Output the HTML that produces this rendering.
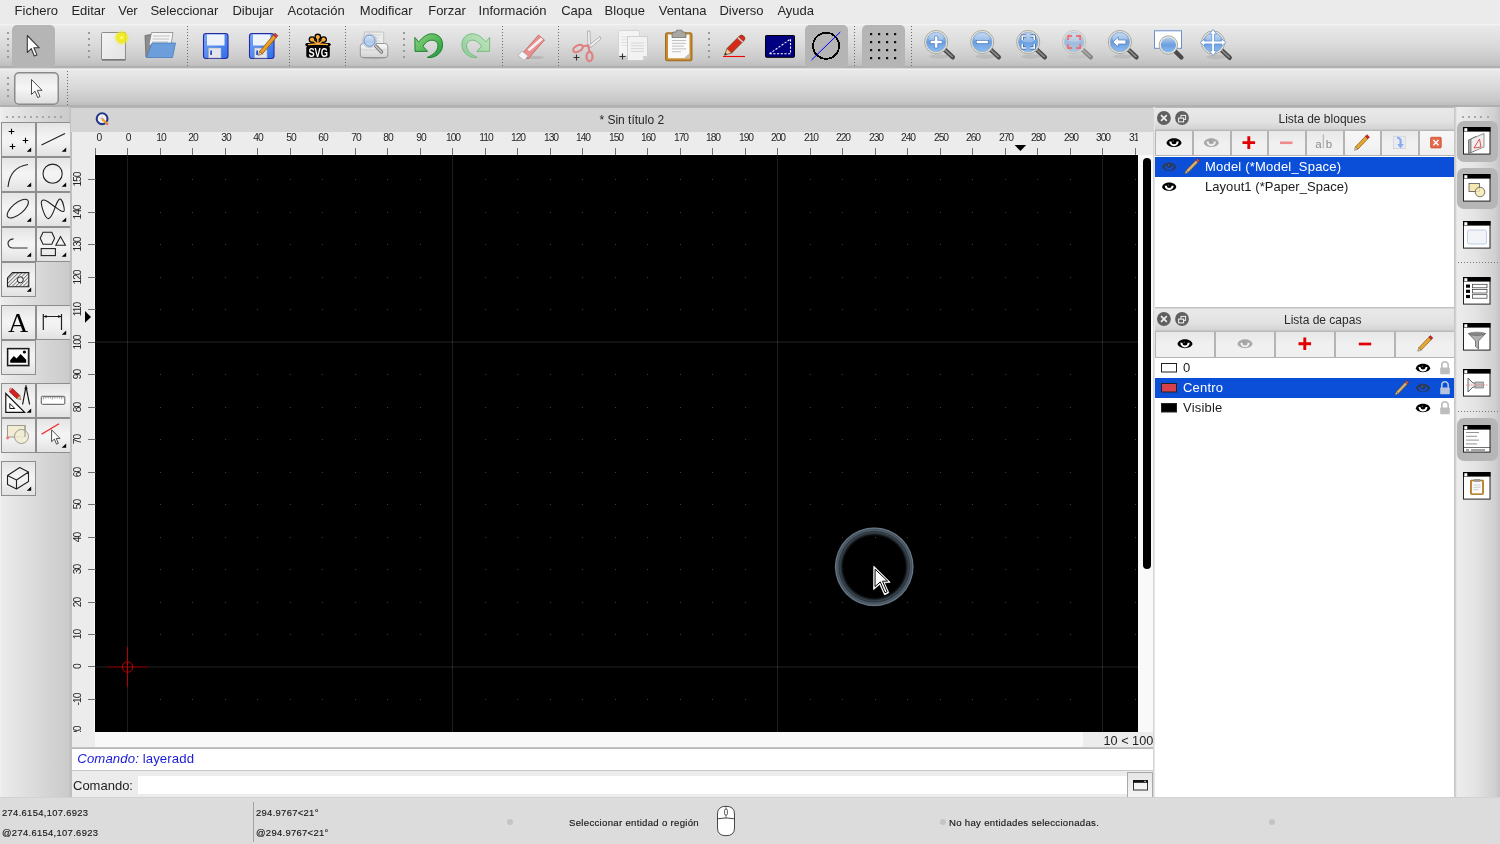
<!DOCTYPE html><html><head><meta charset="utf-8"><style>
html,body{margin:0;padding:0}
body{will-change:transform;width:1500px;height:844px;overflow:hidden;position:relative;background:#ebebeb;font-family:"Liberation Sans",sans-serif}
.a{position:absolute;box-sizing:border-box}
.t{position:absolute;white-space:nowrap;line-height:1}
svg{overflow:visible}
</style></head><body>
<div class="a" style="left:0px;top:0px;width:1500px;height:24px;background:#ebebeb"></div>
<div class="t " style="left:14.60px;top:3.69px;font-size:13px;color:#252525;">Fichero</div>
<div class="t " style="left:71.40px;top:3.69px;font-size:13px;color:#252525;">Editar</div>
<div class="t " style="left:118.20px;top:3.69px;font-size:13px;color:#252525;">Ver</div>
<div class="t " style="left:150.40px;top:3.69px;font-size:13px;color:#252525;">Seleccionar</div>
<div class="t " style="left:232.40px;top:3.69px;font-size:13px;color:#252525;">Dibujar</div>
<div class="t " style="left:287.60px;top:3.69px;font-size:13px;color:#252525;">Acotación</div>
<div class="t " style="left:359.80px;top:3.69px;font-size:13px;color:#252525;">Modificar</div>
<div class="t " style="left:428.20px;top:3.69px;font-size:13px;color:#252525;">Forzar</div>
<div class="t " style="left:478.60px;top:3.69px;font-size:13px;color:#252525;">Información</div>
<div class="t " style="left:561.20px;top:3.69px;font-size:13px;color:#252525;">Capa</div>
<div class="t " style="left:604.60px;top:3.69px;font-size:13px;color:#252525;">Bloque</div>
<div class="t " style="left:658.70px;top:3.69px;font-size:13px;color:#252525;">Ventana</div>
<div class="t " style="left:719.40px;top:3.69px;font-size:13px;color:#252525;">Diverso</div>
<div class="t " style="left:777.40px;top:3.69px;font-size:13px;color:#252525;">Ayuda</div>
<div class="a" style="left:0px;top:24px;width:1500px;height:44px;background:linear-gradient(#f5f5f5 0px,#e9e9e9 2px,#dbdbdb 20px,#c9c9c9 36px,#bebebe 42px,#adadad 42.6px,#b2b2b2 44px)"></div>
<div class="a" style="left:0px;top:68px;width:1500px;height:39px;background:linear-gradient(#c4c4c4 0px,#f3f3f3 1px,#e9e9e9 2.5px,#dadada 18px,#c9c9c9 32px,#bebebe 37px,#adadad 37.6px,#b2b2b2 39px)"></div>
<div class="a" style="left:7px;top:32px;width:2px;height:2px;background:#9a9a9a"></div>
<div class="a" style="left:7px;top:38px;width:2px;height:2px;background:#9a9a9a"></div>
<div class="a" style="left:7px;top:44px;width:2px;height:2px;background:#9a9a9a"></div>
<div class="a" style="left:7px;top:50px;width:2px;height:2px;background:#9a9a9a"></div>
<div class="a" style="left:7px;top:56px;width:2px;height:2px;background:#9a9a9a"></div>
<div class="a" style="left:12px;top:25px;width:43px;height:43px;background:#b5b5b5;border-radius:5px"></div>
<div class="a" style="left:88px;top:32px;width:2px;height:2px;background:#9a9a9a"></div>
<div class="a" style="left:88px;top:38px;width:2px;height:2px;background:#9a9a9a"></div>
<div class="a" style="left:88px;top:44px;width:2px;height:2px;background:#9a9a9a"></div>
<div class="a" style="left:88px;top:50px;width:2px;height:2px;background:#9a9a9a"></div>
<div class="a" style="left:88px;top:56px;width:2px;height:2px;background:#9a9a9a"></div>
<div class="a" style="left:187px;top:26px;width:1px;height:40px;background:repeating-linear-gradient(#6a6a6a 0 1px,transparent 1px 3px)"></div>
<div class="a" style="left:289px;top:26px;width:1px;height:40px;background:repeating-linear-gradient(#6a6a6a 0 1px,transparent 1px 3px)"></div>
<div class="a" style="left:345px;top:26px;width:1px;height:40px;background:repeating-linear-gradient(#6a6a6a 0 1px,transparent 1px 3px)"></div>
<div class="a" style="left:403px;top:32px;width:2px;height:2px;background:#9a9a9a"></div>
<div class="a" style="left:403px;top:38px;width:2px;height:2px;background:#9a9a9a"></div>
<div class="a" style="left:403px;top:44px;width:2px;height:2px;background:#9a9a9a"></div>
<div class="a" style="left:403px;top:50px;width:2px;height:2px;background:#9a9a9a"></div>
<div class="a" style="left:403px;top:56px;width:2px;height:2px;background:#9a9a9a"></div>
<div class="a" style="left:502px;top:26px;width:1px;height:40px;background:repeating-linear-gradient(#6a6a6a 0 1px,transparent 1px 3px)"></div>
<div class="a" style="left:558px;top:26px;width:1px;height:40px;background:repeating-linear-gradient(#6a6a6a 0 1px,transparent 1px 3px)"></div>
<div class="a" style="left:708px;top:32px;width:2px;height:2px;background:#9a9a9a"></div>
<div class="a" style="left:708px;top:38px;width:2px;height:2px;background:#9a9a9a"></div>
<div class="a" style="left:708px;top:44px;width:2px;height:2px;background:#9a9a9a"></div>
<div class="a" style="left:708px;top:50px;width:2px;height:2px;background:#9a9a9a"></div>
<div class="a" style="left:708px;top:56px;width:2px;height:2px;background:#9a9a9a"></div>
<div class="a" style="left:805px;top:25px;width:43px;height:43px;background:#b5b5b5;border-radius:5px"></div>
<div class="a" style="left:854px;top:26px;width:1px;height:40px;background:repeating-linear-gradient(#6a6a6a 0 1px,transparent 1px 3px)"></div>
<div class="a" style="left:862px;top:25px;width:43px;height:43px;background:#b5b5b5;border-radius:5px"></div>
<div class="a" style="left:911px;top:26px;width:1px;height:40px;background:repeating-linear-gradient(#6a6a6a 0 1px,transparent 1px 3px)"></div>
<div class="a" style="left:7px;top:77px;width:2px;height:2px;background:#9a9a9a"></div>
<div class="a" style="left:7px;top:83px;width:2px;height:2px;background:#9a9a9a"></div>
<div class="a" style="left:7px;top:89px;width:2px;height:2px;background:#9a9a9a"></div>
<div class="a" style="left:7px;top:95px;width:2px;height:2px;background:#9a9a9a"></div>
<div class="a" style="left:14px;top:72px;width:45px;height:33px;box-shadow:inset 0 0 0 1.5px #8a8a8a;border-radius:5px;background:linear-gradient(#e6e6e6,#f6f6f6 50%,#dcdcdc)"></div>
<div class="a" style="left:67px;top:71px;width:1px;height:34px;background:repeating-linear-gradient(#6a6a6a 0 1px,transparent 1px 3px)"></div>
<svg width="0" height="0" style="position:absolute"><defs><linearGradient id="zblue" x1="0" y1="0" x2="0" y2="1"><stop offset="0" stop-color="#b8d0ee"/><stop offset="0.5" stop-color="#6a9ee0"/><stop offset="1" stop-color="#8bbcf0"/></linearGradient><linearGradient id="flop" x1="0" y1="0" x2="1" y2="1"><stop offset="0" stop-color="#7aa8f8"/><stop offset="1" stop-color="#2f6ee8"/></linearGradient><linearGradient id="grn" x1="0" y1="0" x2="1" y2="1"><stop offset="0" stop-color="#8fd47e"/><stop offset="1" stop-color="#1f9a3a"/></linearGradient><linearGradient id="grnl" x1="0" y1="0" x2="1" y2="1"><stop offset="0" stop-color="#c4e6c0"/><stop offset="1" stop-color="#8ccb98"/></linearGradient><linearGradient id="pg" x1="0" y1="0" x2="1" y2="1"><stop offset="0" stop-color="#f4f4f4"/><stop offset="1" stop-color="#e2e2e2"/></linearGradient><radialGradient id="glow"><stop offset="0" stop-color="#ffffd0"/><stop offset="0.3" stop-color="#f4ee10"/><stop offset="0.7" stop-color="#eee820" stop-opacity="0.8"/><stop offset="1" stop-color="#f0ec20" stop-opacity="0"/></radialGradient><linearGradient id="prt" x1="0" y1="0" x2="0" y2="1"><stop offset="0" stop-color="#fafafa"/><stop offset="1" stop-color="#d2d2d2"/></linearGradient><linearGradient id="lens" x1="0" y1="0" x2="0" y2="1"><stop offset="0" stop-color="#dce8f6"/><stop offset="0.6" stop-color="#b0c8e8"/><stop offset="1" stop-color="#c8dcf4"/></linearGradient></defs></svg>
<svg class="a" style="left:20px;top:30px" width="30" height="32" viewBox="20 30 30 32"><path d="M27.30 35.50 L27.30 52.50 L31.30 48.70 L34.30 56.00 L36.90 54.90 L33.90 47.80 L39.30 47.80 Z" fill="#fff" stroke="#3a3a3a" stroke-width="1.1" stroke-linejoin="round"/></svg>
<svg class="a" style="left:98px;top:28px" width="34" height="36" viewBox="98 28 34 36"><rect x="101.5" y="32.5" width="24" height="27.5" rx="1" fill="url(#pg)" stroke="#8c8c8c" stroke-width="1"/><rect x="102" y="59" width="23.5" height="1.5" fill="#777"/><circle cx="121.7" cy="37.7" r="7.6" fill="url(#glow)"/></svg>
<svg class="a" style="left:142px;top:30px" width="38" height="32" viewBox="142 30 38 32"><path d="M145 35.5 L151.5 34.5 L151 57 L146 57 Z" fill="#8c8c8c" stroke="#666" stroke-width="0.8"/><path d="M151.5 32.5 L173 32.5 L171 45 L149 45 Z" fill="#f6f6f6" stroke="#888" stroke-width="0.8"/><path d="M153 36 h17 M152.5 39 h16.5 M152 42 h16" stroke="#bdbdbd" stroke-width="1.2"/><path d="M152 43 L175.5 43 L172.5 57.5 L146.5 57.5 Z" fill="#6c9edb" stroke="#4a7cc0" stroke-width="0.8"/></svg>
<svg class="a" style="left:200px;top:30px" width="32" height="32" viewBox="200 30 32 32"><rect x="203.5" y="33.5" width="24.5" height="25" rx="2.5" fill="url(#flop)" stroke="#2a2aa0" stroke-width="1.1"/><rect x="207" y="34.5" width="17.5" height="11" fill="#eef2fb"/><rect x="208.5" y="48" width="12.5" height="10" fill="#e4e4ec" stroke="#9aa" stroke-width="0.5"/><rect x="210.3" y="50.5" width="1.6" height="4.5" fill="#1040c0"/></svg>
<svg class="a" style="left:246px;top:28px" width="34" height="34" viewBox="246 28 34 34"><rect x="249.5" y="33.5" width="24.5" height="25" rx="2.5" fill="url(#flop)" stroke="#2a2aa0" stroke-width="1.1"/><rect x="253" y="34.5" width="17.5" height="11" fill="#eef2fb"/><rect x="254.5" y="48" width="12.5" height="10" fill="#e4e4ec" stroke="#9aa" stroke-width="0.5"/><rect x="256.3" y="50.5" width="1.6" height="4.5" fill="#1040c0"/><path d="M259.5 51.5 L273.5 35 L276.3 37.4 L262.3 53.9 Z" fill="#f0a020" stroke="#8a4a10" stroke-width="0.8"/><path d="M273.5 35 L275 33.2 L277.8 35.6 L276.3 37.4 Z" fill="#e04040" stroke="#8a2a10" stroke-width="0.7"/><path d="M259.5 51.5 L258.4 55.4 L262.3 53.9 Z" fill="#f0d0a0" stroke="#5a3a10" stroke-width="0.5"/></svg>
<svg class="a" style="left:302px;top:30px" width="32" height="30" viewBox="302 30 32 30"><circle cx="317.8" cy="37.0" r="3.4" fill="#000"/><path d="M318 44.5 L317.8 37.0" stroke="#000" stroke-width="3.6"/><circle cx="312.0" cy="39.6" r="3.4" fill="#000"/><path d="M318 44.5 L312.0 39.6" stroke="#000" stroke-width="3.6"/><circle cx="323.6" cy="39.6" r="3.4" fill="#000"/><path d="M318 44.5 L323.6 39.6" stroke="#000" stroke-width="3.6"/><path d="M307 44.6 L329 44.6" stroke="#000" stroke-width="3.4" stroke-linecap="round"/><circle cx="317.8" cy="37.0" r="2.1" fill="#fbae3c"/><path d="M318 44.5 L317.8 37.0" stroke="#fbae3c" stroke-width="1.5"/><circle cx="312.0" cy="39.6" r="2.1" fill="#fbae3c"/><path d="M318 44.5 L312.0 39.6" stroke="#fbae3c" stroke-width="1.5"/><circle cx="323.6" cy="39.6" r="2.1" fill="#fbae3c"/><path d="M318 44.5 L323.6 39.6" stroke="#fbae3c" stroke-width="1.5"/><path d="M308 44.8 Q318 43.2 328 44.8" stroke="#fbae3c" stroke-width="1.5" fill="none"/><rect x="306.3" y="45.6" width="23.5" height="12.2" rx="2.6" fill="#000"/><text x="0" y="0" text-anchor="middle" font-family="Liberation Sans" font-weight="bold" font-size="13.6" fill="#fff" transform="translate(318.2 56.6) scale(0.68 1)">SVG</text></svg>
<svg class="a" style="left:356px;top:29px" width="36" height="33" viewBox="356 29 36 33"><rect x="364.3" y="32" width="19.4" height="14" rx="1" fill="#ececec" stroke="#b8b8b8" stroke-width="0.8"/><path d="M367 35 h14 M367 38 h12 M367 41 h13" stroke="#d4d4d4" stroke-width="1"/><ellipse cx="374" cy="57.6" rx="13" ry="1.6" fill="#000" opacity="0.15"/><path d="M360.3 46.5 Q360.3 43.5 363.3 43.5 L384.8 43.5 Q387.8 43.5 387.8 46.5 L387.8 55 Q387.8 57.5 385 57.5 L363 57.5 Q360.3 57.5 360.3 55 Z" fill="url(#prt)" stroke="#8e8e8e" stroke-width="0.9"/><path d="M362 48.5 Q362 50 364 50 L384 50 Q386 50 386 48.5" fill="none" stroke="#c8c8c8" stroke-width="0.8"/><path d="M375.5 45.8 L381.5 52" stroke="#777" stroke-width="3.4" stroke-linecap="round"/><path d="M375.5 45.8 L381.5 52" stroke="#c8c8c8" stroke-width="1.6" stroke-linecap="round"/><circle cx="369.5" cy="40.7" r="6.9" fill="#f2f2f2" stroke="#aaa" stroke-width="0.6"/><circle cx="369.5" cy="40.7" r="5.6" fill="url(#lens)" stroke="#5a8ad0" stroke-width="1"/></svg>
<svg class="a" style="left:410px;top:30px" width="38" height="32" viewBox="410 30 38 32"><path d="M414.8 37.4 L418.7 42 C422 38 426.5 33.8 431.9 33.8 C438.5 33.8 442.6 38.5 442.6 44.5 C442.6 52 437 57 430 57.6 L427.3 57.4 C433 55 437.9 51 437.9 45.9 C437.9 42 435 40.2 431.9 40.2 C428 40.2 425 43 423 46.3 L427.6 51.4 L415 51.4 Z" fill="url(#grn)" stroke="#137a2a" stroke-width="0.9" stroke-linejoin="round"/></svg>
<svg class="a" style="left:456px;top:30px" width="38" height="32" viewBox="456 30 38 32"><g transform="translate(904.5 0) scale(-1 1)"><path d="M414.8 37.4 L418.7 42 C422 38 426.5 33.8 431.9 33.8 C438.5 33.8 442.6 38.5 442.6 44.5 C442.6 52 437 57 430 57.6 L427.3 57.4 C433 55 437.9 51 437.9 45.9 C437.9 42 435 40.2 431.9 40.2 C428 40.2 425 43 423 46.3 L427.6 51.4 L415 51.4 Z" fill="url(#grnl)" stroke="#6fb87c" stroke-width="0.9" stroke-linejoin="round"/></g></svg>
<svg class="a" style="left:514px;top:30px" width="36" height="32" viewBox="514 30 36 32"><ellipse cx="533" cy="57.5" rx="11" ry="1.6" fill="#000" opacity="0.10"/><path d="M522 54 L538.5 35 L544.5 40 L528 59 Z" fill="#e89090" stroke="#c06060" stroke-width="0.8"/><path d="M527.5 49.5 L541 37.6 L543 39.5 L529.5 51.3 Z" fill="#f4f0f0"/><path d="M518 55.5 L522 51 L528 56 L524 60.5 Z" fill="#f4f4f4" stroke="#aaa" stroke-width="0.8"/></svg>
<svg class="a" style="left:570px;top:28px" width="36" height="36" viewBox="570 28 36 36"><path d="M587.5 31 L590 31 L590.5 47 L588 47 Z" fill="#f4f4f4" stroke="#999" stroke-width="0.7"/><path d="M589.5 45 L600 36.5 L600.8 39 L590.5 47.5 Z" fill="#f4f4f4" stroke="#999" stroke-width="0.7"/><ellipse cx="578" cy="48.5" rx="5.2" ry="3" transform="rotate(-28 578 48.5)" fill="none" stroke="#e08080" stroke-width="2.2"/><ellipse cx="589.5" cy="56.5" rx="3" ry="4.6" fill="none" stroke="#e08080" stroke-width="2.2"/><path d="M582 46.5 L588 45.5 L589.5 51.5" fill="none" stroke="#e08080" stroke-width="2"/><path d="M576.5 54.5 v6 M573.5 57.5 h6" stroke="#333" stroke-width="1.1"/></svg>
<svg class="a" style="left:615px;top:28px" width="36" height="36" viewBox="615 28 36 36"><rect x="618.5" y="30.5" width="21" height="25.5" rx="1" fill="#f4f4f4" stroke="#cfcfcf" stroke-width="0.8"/><path d="M621.5 37 h8 M621.5 39.8 h8 M621.5 42.6 h8 M621.5 45.4 h8" stroke="#e0e0e0" stroke-width="1"/><path d="M627.5 36.5 L647.5 36.5 L647.5 56 L643 60.5 L627.5 60.5 Z" fill="#f2f2f2" stroke="#c8c8c8" stroke-width="0.8"/><path d="M643 60.5 L643 56 L647.5 56 Z" fill="#d0d0d0"/><path d="M631 43 h13 M631 45.8 h13 M631 48.6 h13 M631 51.4 h13" stroke="#d6d6d6" stroke-width="1"/><path d="M622.5 53.5 v6 M619.5 56.5 h6" stroke="#333" stroke-width="1.1"/></svg>
<svg class="a" style="left:662px;top:27px" width="34" height="36" viewBox="662 27 34 36"><rect x="665.5" y="32.8" width="26.5" height="28" rx="1.5" fill="#c88a2a" stroke="#8a5a10" stroke-width="0.8"/><rect x="668" y="34.5" width="21.5" height="23.8" fill="#fafafa"/><path d="M684 58.3 L689.5 58.3 L689.5 53 Z" fill="#bbb"/><path d="M672 34 Q672 32 674 32 L676 32 L676.5 30.2 L682 30.2 L682.5 32 L684 32 Q686 32 686 34 L686 37.5 L672 37.5 Z" fill="#a8a8a0" stroke="#666" stroke-width="0.7"/><path d="M672 40.5 h14 M672 43.3 h14 M672 46.1 h12 M672 48.9 h14 M672 51.7 h9" stroke="#c0c0c0" stroke-width="1"/></svg>
<svg class="a" style="left:720px;top:32px" width="30" height="28" viewBox="720 32 30 28"><path d="M723 56.5 h22" stroke="#f00000" stroke-width="1.1"/><path d="M727 48.5 L739.5 36 Q741.5 34.2 743.5 36 L744.2 36.8 Q745.8 38.6 744 40.4 L731.6 53 Z" fill="#d82a1a" stroke="#6a3a10" stroke-width="0.8"/><path d="M738 37.6 L742.6 42" stroke="#ccc" stroke-width="1.6"/><path d="M727 48.5 L731.6 53 L724.5 55.2 Z" fill="#f2c8a0" stroke="#6a3a10" stroke-width="0.7"/><path d="M724.5 55.2 L725.4 52.6 L727 54.2 Z" fill="#222"/></svg>
<svg class="a" style="left:762px;top:32px" width="36" height="28" viewBox="762 32 36 28"><rect x="765.5" y="35.5" width="29" height="21.8" rx="0.8" fill="#000080" stroke="#000" stroke-width="1"/><path d="M769.5 53.8 L790.5 39 L790.5 53.8 Z" fill="none" stroke="#fff" stroke-width="1.1" stroke-dasharray="2.2 1.5"/></svg>
<svg class="a" style="left:808px;top:28px" width="36" height="36" viewBox="808 28 36 36"><circle cx="826.1" cy="45.8" r="13" fill="none" stroke="#000" stroke-width="1.8" shape-rendering="crispEdges"/><path d="M811.5 60 L840.3 32" stroke="#0000ff" stroke-width="1"/></svg>
<svg class="a" style="left:866px;top:30px" width="34" height="34" viewBox="866 30 34 34"><rect x="870" y="33" width="2.2" height="2.2" fill="#111"/><rect x="870" y="41" width="2.2" height="2.2" fill="#111"/><rect x="870" y="49" width="2.2" height="2.2" fill="#111"/><rect x="870" y="57" width="2.2" height="2.2" fill="#111"/><rect x="878" y="33" width="2.2" height="2.2" fill="#111"/><rect x="878" y="41" width="2.2" height="2.2" fill="#111"/><rect x="878" y="49" width="2.2" height="2.2" fill="#111"/><rect x="878" y="57" width="2.2" height="2.2" fill="#111"/><rect x="886" y="33" width="2.2" height="2.2" fill="#111"/><rect x="886" y="41" width="2.2" height="2.2" fill="#111"/><rect x="886" y="49" width="2.2" height="2.2" fill="#111"/><rect x="886" y="57" width="2.2" height="2.2" fill="#111"/><rect x="894" y="33" width="2.2" height="2.2" fill="#111"/><rect x="894" y="41" width="2.2" height="2.2" fill="#111"/><rect x="894" y="49" width="2.2" height="2.2" fill="#111"/><rect x="894" y="57" width="2.2" height="2.2" fill="#111"/></svg>
<svg class="a" style="left:915px;top:26px" width="330" height="40" viewBox="915 26 330 40"><g><ellipse cx="939.2" cy="56.5" rx="10" ry="2.2" fill="#000" opacity="0.08"/><path d="M944.4000000000001 49.3 L952.7 57.2" stroke="#4a4a4a" stroke-width="4.6" stroke-linecap="round"/><path d="M944.4000000000001 49.3 L952.2 56.7" stroke="#8a8a8a" stroke-width="1.6" stroke-linecap="round"/><circle cx="936.2" cy="42" r="11.6" fill="#e9e8e0" stroke="#9a9a90" stroke-width="0.8"/><circle cx="936.2" cy="42" r="9.8" fill="url(#zblue)" stroke="#7e9cc4" stroke-width="0.6"/><ellipse cx="936.2" cy="38" rx="7.5" ry="4.5" fill="#fff" opacity="0.25"/></g><path d="M934.6 36 h3.2 v4.4 h4.4 v3.2 h-4.4 v4.4 h-3.2 v-4.4 h-4.4 v-3.2 h4.4 Z" fill="#fff" stroke="#3a6ab0" stroke-width="0.6"/><g><ellipse cx="985.2" cy="56.5" rx="10" ry="2.2" fill="#000" opacity="0.08"/><path d="M990.4000000000001 49.3 L998.7 57.2" stroke="#4a4a4a" stroke-width="4.6" stroke-linecap="round"/><path d="M990.4000000000001 49.3 L998.2 56.7" stroke="#8a8a8a" stroke-width="1.6" stroke-linecap="round"/><circle cx="982.2" cy="42" r="11.6" fill="#e9e8e0" stroke="#9a9a90" stroke-width="0.8"/><circle cx="982.2" cy="42" r="9.8" fill="url(#zblue)" stroke="#7e9cc4" stroke-width="0.6"/><ellipse cx="982.2" cy="38" rx="7.5" ry="4.5" fill="#fff" opacity="0.25"/></g><rect x="976.2" y="40.3" width="12" height="3.4" fill="#fff" stroke="#3a6ab0" stroke-width="0.6"/><g><ellipse cx="1031.2" cy="56.5" rx="10" ry="2.2" fill="#000" opacity="0.08"/><path d="M1036.4 49.3 L1044.7 57.2" stroke="#4a4a4a" stroke-width="4.6" stroke-linecap="round"/><path d="M1036.4 49.3 L1044.2 56.7" stroke="#8a8a8a" stroke-width="1.6" stroke-linecap="round"/><circle cx="1028.2" cy="42" r="11.6" fill="#e9e8e0" stroke="#9a9a90" stroke-width="0.8"/><circle cx="1028.2" cy="42" r="9.8" fill="url(#zblue)" stroke="#7e9cc4" stroke-width="0.6"/><ellipse cx="1028.2" cy="38" rx="7.5" ry="4.5" fill="#fff" opacity="0.25"/></g><path d="M1022.2 40 v-4 h4 M1030.2 36 h4 v4 M1034.2 44 v4 h-4 M1026.2 48 h-4 v-4" fill="none" stroke="#2a5aa0" stroke-width="2.8"/><path d="M1022.2 40 v-4 h4 M1030.2 36 h4 v4 M1034.2 44 v4 h-4 M1026.2 48 h-4 v-4" fill="none" stroke="#fff" stroke-width="1.6"/><g opacity="0.55"><ellipse cx="1077.1" cy="56.5" rx="10" ry="2.2" fill="#000" opacity="0.08"/><path d="M1082.3 49.3 L1090.6 57.2" stroke="#4a4a4a" stroke-width="4.6" stroke-linecap="round"/><path d="M1082.3 49.3 L1090.1 56.7" stroke="#8a8a8a" stroke-width="1.6" stroke-linecap="round"/><circle cx="1074.1" cy="42" r="11.6" fill="#e9e8e0" stroke="#9a9a90" stroke-width="0.8"/><circle cx="1074.1" cy="42" r="9.8" fill="url(#zblue)" stroke="#7e9cc4" stroke-width="0.6"/><ellipse cx="1074.1" cy="38" rx="7.5" ry="4.5" fill="#fff" opacity="0.25"/></g><path d="M1068.1 40 v-4 h4 M1076.1 36 h4 v4 M1080.1 44 v4 h-4 M1072.1 48 h-4 v-4" fill="none" stroke="#f07070" stroke-width="1.8"/><g><ellipse cx="1122.9" cy="56.5" rx="10" ry="2.2" fill="#000" opacity="0.08"/><path d="M1128.1000000000001 49.3 L1136.4 57.2" stroke="#4a4a4a" stroke-width="4.6" stroke-linecap="round"/><path d="M1128.1000000000001 49.3 L1135.9 56.7" stroke="#8a8a8a" stroke-width="1.6" stroke-linecap="round"/><circle cx="1119.9" cy="42" r="11.6" fill="#e9e8e0" stroke="#9a9a90" stroke-width="0.8"/><circle cx="1119.9" cy="42" r="9.8" fill="url(#zblue)" stroke="#7e9cc4" stroke-width="0.6"/><ellipse cx="1119.9" cy="38" rx="7.5" ry="4.5" fill="#fff" opacity="0.25"/></g><path d="M1112.9 42 L1118.4 37 L1118.4 40 L1125.9 40 L1125.9 44 L1118.4 44 L1118.4 47 Z" fill="#fff" stroke="#3a6ab0" stroke-width="0.6"/><rect x="1154.5" y="30.8" width="27" height="17.5" fill="#fff" stroke="#6a90c8" stroke-width="1"/><path d="M1174.9 51 L1181.4 57.5" stroke="#4a4a4a" stroke-width="4.4" stroke-linecap="round"/><circle cx="1168.4" cy="45" r="9.2" fill="#e9e8e0" stroke="#9a9a90" stroke-width="0.8"/><circle cx="1168.4" cy="45" r="7.6" fill="url(#zblue)"/><g><ellipse cx="1216.1" cy="57.0" rx="10" ry="2.2" fill="#000" opacity="0.08"/><path d="M1221.3 49.8 L1229.6 57.7" stroke="#4a4a4a" stroke-width="4.6" stroke-linecap="round"/><path d="M1221.3 49.8 L1229.1 57.2" stroke="#8a8a8a" stroke-width="1.6" stroke-linecap="round"/><circle cx="1213.1" cy="42.5" r="11.6" fill="#e9e8e0" stroke="#9a9a90" stroke-width="0.8"/><circle cx="1213.1" cy="42.5" r="9.8" fill="url(#zblue)" stroke="#7e9cc4" stroke-width="0.6"/><ellipse cx="1213.1" cy="38.5" rx="7.5" ry="4.5" fill="#fff" opacity="0.25"/></g><path d="M1213.1 29.5 L1216.6 34.0 L1214.5 34.0 L1214.5 41.1 L1221.6 41.1 L1221.6 39.0 L1226.1 42.5 L1221.6 46.0 L1221.6 43.9 L1214.5 43.9 L1214.5 51.0 L1216.6 51.0 L1213.1 55.5 L1209.6 51.0 L1211.6999999999998 51.0 L1211.6999999999998 43.9 L1204.6 43.9 L1204.6 46.0 L1200.1 42.5 L1204.6 39.0 L1204.6 41.1 L1211.6999999999998 41.1 L1211.6999999999998 34.0 L1209.6 34.0 Z" fill="#fff" stroke="#5a8ad0" stroke-width="0.7"/></svg>
<svg class="a" style="left:26px;top:75px" width="20" height="26" viewBox="26 75 20 26"><path d="M31.50 79.50 L31.50 94.46 L35.02 91.12 L37.66 97.54 L39.95 96.57 L37.31 90.32 L42.06 90.32 Z" fill="#fff" stroke="#3a3a3a" stroke-width="0.9" stroke-linejoin="round"/></svg>
<div class="a" style="left:0px;top:107px;width:71px;height:691px;background:linear-gradient(90deg,#f2f2f2 0px,#ebebeb 2px,#e2e2e2 20px,#d3d3d3 50px,#cbcbcb 69px,#bdbdbd 70px,#bdbdbd 71px)"></div>
<div class="a" style="left:6px;top:116px;width:2px;height:2px;background:#a8a8a8"></div>
<div class="a" style="left:12px;top:116px;width:2px;height:2px;background:#a8a8a8"></div>
<div class="a" style="left:18px;top:116px;width:2px;height:2px;background:#a8a8a8"></div>
<div class="a" style="left:24px;top:116px;width:2px;height:2px;background:#a8a8a8"></div>
<div class="a" style="left:30px;top:116px;width:2px;height:2px;background:#a8a8a8"></div>
<div class="a" style="left:36px;top:116px;width:2px;height:2px;background:#a8a8a8"></div>
<div class="a" style="left:42px;top:116px;width:2px;height:2px;background:#a8a8a8"></div>
<div class="a" style="left:48px;top:116px;width:2px;height:2px;background:#a8a8a8"></div>
<div class="a" style="left:54px;top:116px;width:2px;height:2px;background:#a8a8a8"></div>
<div class="a" style="left:60px;top:116px;width:2px;height:2px;background:#a8a8a8"></div>
<div class="a" style="left:1px;top:122px;width:35px;height:35px;border:1px solid #8e8e8e;background:linear-gradient(#e4e4e4,#f4f4f4 45%,#f2f2f2 60%,#e2e2e2)"></div>
<div class="a" style="left:36px;top:122px;width:35px;height:35px;border:1px solid #8e8e8e;background:linear-gradient(#e4e4e4,#f4f4f4 45%,#f2f2f2 60%,#e2e2e2)"></div>
<div class="a" style="left:1px;top:157px;width:35px;height:35px;border:1px solid #8e8e8e;background:linear-gradient(#e4e4e4,#f4f4f4 45%,#f2f2f2 60%,#e2e2e2)"></div>
<div class="a" style="left:36px;top:157px;width:35px;height:35px;border:1px solid #8e8e8e;background:linear-gradient(#e4e4e4,#f4f4f4 45%,#f2f2f2 60%,#e2e2e2)"></div>
<div class="a" style="left:1px;top:192px;width:35px;height:35px;border:1px solid #8e8e8e;background:linear-gradient(#e4e4e4,#f4f4f4 45%,#f2f2f2 60%,#e2e2e2)"></div>
<div class="a" style="left:36px;top:192px;width:35px;height:35px;border:1px solid #8e8e8e;background:linear-gradient(#e4e4e4,#f4f4f4 45%,#f2f2f2 60%,#e2e2e2)"></div>
<div class="a" style="left:1px;top:227px;width:35px;height:35px;border:1px solid #8e8e8e;background:linear-gradient(#e4e4e4,#f4f4f4 45%,#f2f2f2 60%,#e2e2e2)"></div>
<div class="a" style="left:36px;top:227px;width:35px;height:35px;border:1px solid #8e8e8e;background:linear-gradient(#e4e4e4,#f4f4f4 45%,#f2f2f2 60%,#e2e2e2)"></div>
<div class="a" style="left:1px;top:262px;width:35px;height:35px;border:1px solid #8e8e8e;background:linear-gradient(#e4e4e4,#f4f4f4 45%,#f2f2f2 60%,#e2e2e2)"></div>
<div class="a" style="left:1px;top:305px;width:35px;height:35px;border:1px solid #8e8e8e;background:linear-gradient(#e4e4e4,#f4f4f4 45%,#f2f2f2 60%,#e2e2e2)"></div>
<div class="a" style="left:36px;top:305px;width:35px;height:35px;border:1px solid #8e8e8e;background:linear-gradient(#e4e4e4,#f4f4f4 45%,#f2f2f2 60%,#e2e2e2)"></div>
<div class="a" style="left:1px;top:340px;width:35px;height:35px;border:1px solid #8e8e8e;background:linear-gradient(#e4e4e4,#f4f4f4 45%,#f2f2f2 60%,#e2e2e2)"></div>
<div class="a" style="left:1px;top:383px;width:35px;height:35px;border:1px solid #8e8e8e;background:linear-gradient(#e4e4e4,#f4f4f4 45%,#f2f2f2 60%,#e2e2e2)"></div>
<div class="a" style="left:36px;top:383px;width:35px;height:35px;border:1px solid #8e8e8e;background:linear-gradient(#e4e4e4,#f4f4f4 45%,#f2f2f2 60%,#e2e2e2)"></div>
<div class="a" style="left:1px;top:418px;width:35px;height:35px;border:1px solid #8e8e8e;background:linear-gradient(#e4e4e4,#f4f4f4 45%,#f2f2f2 60%,#e2e2e2)"></div>
<div class="a" style="left:36px;top:418px;width:35px;height:35px;border:1px solid #8e8e8e;background:linear-gradient(#e4e4e4,#f4f4f4 45%,#f2f2f2 60%,#e2e2e2)"></div>
<div class="a" style="left:1px;top:461px;width:35px;height:35px;border:1px solid #8e8e8e;background:linear-gradient(#e4e4e4,#f4f4f4 45%,#f2f2f2 60%,#e2e2e2)"></div>
<svg class="a" style="left:0px;top:107px" width="71" height="400" viewBox="0 107 71 400"><path d="M8.7 131.5 h5.6 M11.5 128.7 v5.6" stroke="#000" stroke-width="1.1"/><path d="M22.7 140.5 h5.6 M25.5 137.7 v5.6" stroke="#000" stroke-width="1.1"/><path d="M9.7 146.5 h5.6 M12.5 143.7 v5.6" stroke="#000" stroke-width="1.1"/><path d="M31.2 151.7 L31.2 147.39999999999998 L26.7 151.7 Z" fill="#000"/><path d="M41.5 145 L65 133.5" stroke="#222" stroke-width="1.2"/><path d="M66.2 151.7 L66.2 147.39999999999998 L61.7 151.7 Z" fill="#000"/><path d="M8 187 Q10 167 28 164.5" fill="none" stroke="#222" stroke-width="1.1"/><path d="M31.2 186.7 L31.2 182.39999999999998 L26.7 186.7 Z" fill="#000"/><circle cx="52.6" cy="173.7" r="9.6" fill="none" stroke="#222" stroke-width="1.1"/><path d="M66.2 186.7 L66.2 182.39999999999998 L61.7 186.7 Z" fill="#000"/><ellipse cx="17.8" cy="208.6" rx="13" ry="5.6" transform="rotate(-40 17.8 208.6)" fill="none" stroke="#222" stroke-width="1.1"/><path d="M31.2 221.7 L31.2 217.39999999999998 L26.7 221.7 Z" fill="#000"/><path d="M55 207 C50 203 44 198 41.8 200.8 C40 203.5 45 219 48.5 218.6 C52 218 54 210 56 205 C58 200 59.5 198 61 199.5 C63 201.5 65.5 211 63.5 211.5 C61 212 58 208.5 55 207 Z" fill="none" stroke="#222" stroke-width="1.1"/><path d="M66.2 221.7 L66.2 217.39999999999998 L61.7 221.7 Z" fill="#000"/><path d="M13.5 238.8 Q8 239.5 8 243.5 Q8.5 248 13 248 L27.6 248" fill="none" stroke="#333" stroke-width="1.2"/><path d="M31.2 256.7 L31.2 252.39999999999998 L26.7 256.7 Z" fill="#000"/><path d="M43 232.2 L51.8 232.2 L54.6 238.2 L51.8 244.2 L43 244.2 L40.2 238.2 Z" fill="none" stroke="#222" stroke-width="1.1"/><path d="M60.5 236.6 L55.8 245.3 L65.4 245.3 Z" fill="none" stroke="#222" stroke-width="1.1"/><rect x="41.2" y="248.6" width="14.2" height="7" fill="none" stroke="#222" stroke-width="1.1"/><path d="M66.2 256.7 L66.2 252.39999999999998 L61.7 256.7 Z" fill="#000"/><defs><pattern id="hp" width="2.6" height="2.6" patternUnits="userSpaceOnUse" patternTransform="rotate(45)"><rect width="0.9" height="2.6" fill="#777"/></pattern></defs><path d="M7.5 282.5 L7.5 278 L12.5 272.6 L28.8 272.6 L28.8 286.8 L7.5 286.8 Z" fill="url(#hp)" stroke="#222" stroke-width="1.1"/><circle cx="20.3" cy="279.8" r="3" fill="#eee" stroke="#222" stroke-width="1"/><path d="M31.2 291.7 L31.2 287.4 L26.7 291.7 Z" fill="#000"/><text x="18.2" y="332" text-anchor="middle" font-family="Liberation Serif" font-size="28" fill="#000">A</text><path d="M43.3 314 v16 M61.5 314 v16" stroke="#222" stroke-width="1.2"/><path d="M43.3 316.5 h18.2" stroke="#222" stroke-width="1"/><path d="M43.6 316.5 l3 -1.6 v3.2 Z M61.2 316.5 l-3 -1.6 v3.2 Z" fill="#111"/><path d="M66.2 334.7 L66.2 330.4 L61.7 334.7 Z" fill="#000"/><rect x="7.6" y="348.6" width="21.2" height="17" fill="#fff" stroke="#1a1a1a" stroke-width="1.5"/><rect x="8.8" y="349.8" width="18.8" height="14.6" fill="none" stroke="#999" stroke-width="0.5"/><path d="M10.2 362.8 L10.2 360.2 L13.8 356 L16.6 358.6 L20.6 354 L26.2 359.8 L26.2 362.8 Z" fill="#000"/><circle cx="24.4" cy="352" r="1.6" fill="#000"/><path d="M5.8 393.5 L5.8 412.4 L24.6 412.4 Z" fill="#fff" stroke="#111" stroke-width="1.2"/><path d="M9.8 403.5 L9.8 408.5 L14.8 408.5 Z" fill="none" stroke="#111" stroke-width="1"/><path d="M9.3 391.6 L12.3 388.4 L19.8 395.4 L16.8 398.6 Z" fill="#d82020" stroke="#6a1a10" stroke-width="0.7"/><path d="M9.3 391.6 L12.3 388.4 L11 387.6 L9 388.6 Z" fill="#f08080"/><path d="M16.8 398.6 L19.8 395.4 L21 399.8 Z" fill="#e8c090" stroke="#6a4a20" stroke-width="0.5"/><path d="M26 386.5 L22.6 404.5 M26 386.5 L29.6 404.5" stroke="#111" stroke-width="1.2"/><circle cx="26" cy="388.5" r="1.4" fill="#111"/><path d="M26 385 v2" stroke="#111" stroke-width="1"/><path d="M31.2 412.7 L31.2 408.4 L26.7 412.7 Z" fill="#000"/><rect x="41.3" y="396.3" width="23.5" height="8" rx="1" fill="#fff" stroke="#555" stroke-width="1"/><path d="M43.3 396.8 v2.6M45.1 396.8 v1.6M46.9 396.8 v1.6M48.7 396.8 v1.6M50.5 396.8 v1.6M52.3 396.8 v2.6M54.1 396.8 v1.6M55.9 396.8 v1.6M57.7 396.8 v1.6M59.5 396.8 v1.6M61.3 396.8 v2.6M63.1 396.8 v1.6" stroke="#555" stroke-width="0.6"/><rect x="7.5" y="425.5" width="17.5" height="11.5" fill="#f2ecd2" stroke="#9a9a90" stroke-width="1"/><circle cx="21.5" cy="436.5" r="7" fill="#f2ecd2" fill-opacity="0.85" stroke="#9a9a90" stroke-width="1"/><path d="M7.5 425.5 h17.5 v11.5" fill="none" stroke="#9a9a90" stroke-width="1"/><circle cx="7.6" cy="438" r="1.4" fill="#f07070"/><path d="M41.5 434.2 L59 423.8" stroke="#f02020" stroke-width="1.2"/><path d="M51.60 429.80 L51.60 441.70 L54.40 439.04 L56.50 444.15 L58.32 443.38 L56.22 438.41 L60.00 438.41 Z" fill="#fff" stroke="#3a3a3a" stroke-width="0.9" stroke-linejoin="round"/><path d="M66.2 447.7 L66.2 443.4 L61.7 447.7 Z" fill="#000"/><path d="M7.5 475.5 L19.7 467.5 L28.5 472 L28.5 481.5 L16.5 489 L7.5 484.5 Z M7.5 475.5 L16.5 480 L28.5 472 M16.5 480 L16.5 489" fill="none" stroke="#222" stroke-width="1.1" stroke-linejoin="round"/><path d="M31.2 490.7 L31.2 486.4 L26.7 490.7 Z" fill="#000"/></svg>
<div class="a" style="left:71px;top:107px;width:84px;height:0px;"></div>
<div class="a" style="left:70px;top:107px;width:1085px;height:691px;background:#ececec;border-left:2px solid #c0c0c0"></div>
<div class="a" style="left:71px;top:107px;width:1084px;height:1px;background:#b5b5b5"></div>
<div class="a" style="left:71px;top:108px;width:1084px;height:24px;background:#d4d4d4"></div>
<div class="t " style="left:599.40px;top:113.64px;font-size:12px;color:#262626;">* Sin título 2</div>
<div class="a" style="left:72px;top:132px;width:1081px;height:23px;background:#ececec"></div>
<div class="a" style="left:72px;top:155px;width:23px;height:593px;background:#ececec"></div>
<div class="a" style="left:95px;top:155px;width:1043px;height:577px;background:#000"></div>
<div class="a" style="left:1138px;top:155px;width:15px;height:577px;background:#f9f9f9"></div>
<div class="a" style="left:1143px;top:158px;width:8px;height:411px;background:#000;border-radius:4px"></div>
<div class="a" style="left:95px;top:732px;width:1058px;height:16px;background:#f8f8f8"></div>
<div class="a" style="left:1083px;top:732px;width:70px;height:16px;background:#ececec"></div>
<div class="t " style="left:1103.50px;top:734.54px;font-size:12.7px;color:#1e1e1e;">10 &lt; 100</div>
<div class="a" style="left:72px;top:747px;width:1081px;height:2px;background:linear-gradient(#c8c8c8,#b4b4b4)"></div>
<div class="a" style="left:72px;top:749px;width:1081px;height:21px;background:#fff"></div>
<div class="a" style="left:72px;top:770px;width:1081px;height:1px;background:#c8c8c8"></div>
<div class="t" style="left:77.3px;top:751.62px;font-size:13.2px;color:#1b1bd8;letter-spacing:0.1px"><i>Comando:</i> layeradd</div>
<div class="a" style="left:72px;top:771px;width:1081px;height:27px;background:#ececec"></div>
<div class="t " style="left:73.00px;top:778.99px;font-size:13px;color:#1e1e1e;">Comando:</div>
<div class="a" style="left:138px;top:776px;width:990px;height:18px;background:#fff"></div>
<div class="a" style="left:1127px;top:772px;width:26px;height:26px;border:1px solid #a9a9a9;background:linear-gradient(#e6e6e6,#f5f5f5)"></div>
<div class="a" style="left:1153px;top:107px;width:1px;height:691px;background:#d6d6d6"></div>
<div class="a" style="left:1154px;top:107px;width:1px;height:691px;background:#e6e6e6"></div>
<svg class="a" style="left:95px;top:155px" width="1043" height="577" viewBox="95 155 1043 577" shape-rendering="crispEdges"><rect x="95" y="155" width="1043" height="577" fill="#000"/><path d="M95 699h1v1h-1zM95 666h1v1h-1zM95 634h1v1h-1zM95 602h1v1h-1zM95 569h1v1h-1zM95 537h1v1h-1zM95 504h1v1h-1zM95 472h1v1h-1zM95 439h1v1h-1zM95 407h1v1h-1zM95 374h1v1h-1zM95 342h1v1h-1zM95 309h1v1h-1zM95 277h1v1h-1zM95 244h1v1h-1zM95 212h1v1h-1zM95 179h1v1h-1zM127 699h1v1h-1zM127 666h1v1h-1zM127 634h1v1h-1zM127 602h1v1h-1zM127 569h1v1h-1zM127 537h1v1h-1zM127 504h1v1h-1zM127 472h1v1h-1zM127 439h1v1h-1zM127 407h1v1h-1zM127 374h1v1h-1zM127 342h1v1h-1zM127 309h1v1h-1zM127 277h1v1h-1zM127 244h1v1h-1zM127 212h1v1h-1zM127 179h1v1h-1zM160 699h1v1h-1zM160 666h1v1h-1zM160 634h1v1h-1zM160 602h1v1h-1zM160 569h1v1h-1zM160 537h1v1h-1zM160 504h1v1h-1zM160 472h1v1h-1zM160 439h1v1h-1zM160 407h1v1h-1zM160 374h1v1h-1zM160 342h1v1h-1zM160 309h1v1h-1zM160 277h1v1h-1zM160 244h1v1h-1zM160 212h1v1h-1zM160 179h1v1h-1zM192 699h1v1h-1zM192 666h1v1h-1zM192 634h1v1h-1zM192 602h1v1h-1zM192 569h1v1h-1zM192 537h1v1h-1zM192 504h1v1h-1zM192 472h1v1h-1zM192 439h1v1h-1zM192 407h1v1h-1zM192 374h1v1h-1zM192 342h1v1h-1zM192 309h1v1h-1zM192 277h1v1h-1zM192 244h1v1h-1zM192 212h1v1h-1zM192 179h1v1h-1zM225 699h1v1h-1zM225 666h1v1h-1zM225 634h1v1h-1zM225 602h1v1h-1zM225 569h1v1h-1zM225 537h1v1h-1zM225 504h1v1h-1zM225 472h1v1h-1zM225 439h1v1h-1zM225 407h1v1h-1zM225 374h1v1h-1zM225 342h1v1h-1zM225 309h1v1h-1zM225 277h1v1h-1zM225 244h1v1h-1zM225 212h1v1h-1zM225 179h1v1h-1zM257 699h1v1h-1zM257 666h1v1h-1zM257 634h1v1h-1zM257 602h1v1h-1zM257 569h1v1h-1zM257 537h1v1h-1zM257 504h1v1h-1zM257 472h1v1h-1zM257 439h1v1h-1zM257 407h1v1h-1zM257 374h1v1h-1zM257 342h1v1h-1zM257 309h1v1h-1zM257 277h1v1h-1zM257 244h1v1h-1zM257 212h1v1h-1zM257 179h1v1h-1zM290 699h1v1h-1zM290 666h1v1h-1zM290 634h1v1h-1zM290 602h1v1h-1zM290 569h1v1h-1zM290 537h1v1h-1zM290 504h1v1h-1zM290 472h1v1h-1zM290 439h1v1h-1zM290 407h1v1h-1zM290 374h1v1h-1zM290 342h1v1h-1zM290 309h1v1h-1zM290 277h1v1h-1zM290 244h1v1h-1zM290 212h1v1h-1zM290 179h1v1h-1zM322 699h1v1h-1zM322 666h1v1h-1zM322 634h1v1h-1zM322 602h1v1h-1zM322 569h1v1h-1zM322 537h1v1h-1zM322 504h1v1h-1zM322 472h1v1h-1zM322 439h1v1h-1zM322 407h1v1h-1zM322 374h1v1h-1zM322 342h1v1h-1zM322 309h1v1h-1zM322 277h1v1h-1zM322 244h1v1h-1zM322 212h1v1h-1zM322 179h1v1h-1zM355 699h1v1h-1zM355 666h1v1h-1zM355 634h1v1h-1zM355 602h1v1h-1zM355 569h1v1h-1zM355 537h1v1h-1zM355 504h1v1h-1zM355 472h1v1h-1zM355 439h1v1h-1zM355 407h1v1h-1zM355 374h1v1h-1zM355 342h1v1h-1zM355 309h1v1h-1zM355 277h1v1h-1zM355 244h1v1h-1zM355 212h1v1h-1zM355 179h1v1h-1zM387 699h1v1h-1zM387 666h1v1h-1zM387 634h1v1h-1zM387 602h1v1h-1zM387 569h1v1h-1zM387 537h1v1h-1zM387 504h1v1h-1zM387 472h1v1h-1zM387 439h1v1h-1zM387 407h1v1h-1zM387 374h1v1h-1zM387 342h1v1h-1zM387 309h1v1h-1zM387 277h1v1h-1zM387 244h1v1h-1zM387 212h1v1h-1zM387 179h1v1h-1zM420 699h1v1h-1zM420 666h1v1h-1zM420 634h1v1h-1zM420 602h1v1h-1zM420 569h1v1h-1zM420 537h1v1h-1zM420 504h1v1h-1zM420 472h1v1h-1zM420 439h1v1h-1zM420 407h1v1h-1zM420 374h1v1h-1zM420 342h1v1h-1zM420 309h1v1h-1zM420 277h1v1h-1zM420 244h1v1h-1zM420 212h1v1h-1zM420 179h1v1h-1zM452 699h1v1h-1zM452 666h1v1h-1zM452 634h1v1h-1zM452 602h1v1h-1zM452 569h1v1h-1zM452 537h1v1h-1zM452 504h1v1h-1zM452 472h1v1h-1zM452 439h1v1h-1zM452 407h1v1h-1zM452 374h1v1h-1zM452 342h1v1h-1zM452 309h1v1h-1zM452 277h1v1h-1zM452 244h1v1h-1zM452 212h1v1h-1zM452 179h1v1h-1zM485 699h1v1h-1zM485 666h1v1h-1zM485 634h1v1h-1zM485 602h1v1h-1zM485 569h1v1h-1zM485 537h1v1h-1zM485 504h1v1h-1zM485 472h1v1h-1zM485 439h1v1h-1zM485 407h1v1h-1zM485 374h1v1h-1zM485 342h1v1h-1zM485 309h1v1h-1zM485 277h1v1h-1zM485 244h1v1h-1zM485 212h1v1h-1zM485 179h1v1h-1zM517 699h1v1h-1zM517 666h1v1h-1zM517 634h1v1h-1zM517 602h1v1h-1zM517 569h1v1h-1zM517 537h1v1h-1zM517 504h1v1h-1zM517 472h1v1h-1zM517 439h1v1h-1zM517 407h1v1h-1zM517 374h1v1h-1zM517 342h1v1h-1zM517 309h1v1h-1zM517 277h1v1h-1zM517 244h1v1h-1zM517 212h1v1h-1zM517 179h1v1h-1zM550 699h1v1h-1zM550 666h1v1h-1zM550 634h1v1h-1zM550 602h1v1h-1zM550 569h1v1h-1zM550 537h1v1h-1zM550 504h1v1h-1zM550 472h1v1h-1zM550 439h1v1h-1zM550 407h1v1h-1zM550 374h1v1h-1zM550 342h1v1h-1zM550 309h1v1h-1zM550 277h1v1h-1zM550 244h1v1h-1zM550 212h1v1h-1zM550 179h1v1h-1zM582 699h1v1h-1zM582 666h1v1h-1zM582 634h1v1h-1zM582 602h1v1h-1zM582 569h1v1h-1zM582 537h1v1h-1zM582 504h1v1h-1zM582 472h1v1h-1zM582 439h1v1h-1zM582 407h1v1h-1zM582 374h1v1h-1zM582 342h1v1h-1zM582 309h1v1h-1zM582 277h1v1h-1zM582 244h1v1h-1zM582 212h1v1h-1zM582 179h1v1h-1zM615 699h1v1h-1zM615 666h1v1h-1zM615 634h1v1h-1zM615 602h1v1h-1zM615 569h1v1h-1zM615 537h1v1h-1zM615 504h1v1h-1zM615 472h1v1h-1zM615 439h1v1h-1zM615 407h1v1h-1zM615 374h1v1h-1zM615 342h1v1h-1zM615 309h1v1h-1zM615 277h1v1h-1zM615 244h1v1h-1zM615 212h1v1h-1zM615 179h1v1h-1zM647 699h1v1h-1zM647 666h1v1h-1zM647 634h1v1h-1zM647 602h1v1h-1zM647 569h1v1h-1zM647 537h1v1h-1zM647 504h1v1h-1zM647 472h1v1h-1zM647 439h1v1h-1zM647 407h1v1h-1zM647 374h1v1h-1zM647 342h1v1h-1zM647 309h1v1h-1zM647 277h1v1h-1zM647 244h1v1h-1zM647 212h1v1h-1zM647 179h1v1h-1zM680 699h1v1h-1zM680 666h1v1h-1zM680 634h1v1h-1zM680 602h1v1h-1zM680 569h1v1h-1zM680 537h1v1h-1zM680 504h1v1h-1zM680 472h1v1h-1zM680 439h1v1h-1zM680 407h1v1h-1zM680 374h1v1h-1zM680 342h1v1h-1zM680 309h1v1h-1zM680 277h1v1h-1zM680 244h1v1h-1zM680 212h1v1h-1zM680 179h1v1h-1zM712 699h1v1h-1zM712 666h1v1h-1zM712 634h1v1h-1zM712 602h1v1h-1zM712 569h1v1h-1zM712 537h1v1h-1zM712 504h1v1h-1zM712 472h1v1h-1zM712 439h1v1h-1zM712 407h1v1h-1zM712 374h1v1h-1zM712 342h1v1h-1zM712 309h1v1h-1zM712 277h1v1h-1zM712 244h1v1h-1zM712 212h1v1h-1zM712 179h1v1h-1zM745 699h1v1h-1zM745 666h1v1h-1zM745 634h1v1h-1zM745 602h1v1h-1zM745 569h1v1h-1zM745 537h1v1h-1zM745 504h1v1h-1zM745 472h1v1h-1zM745 439h1v1h-1zM745 407h1v1h-1zM745 374h1v1h-1zM745 342h1v1h-1zM745 309h1v1h-1zM745 277h1v1h-1zM745 244h1v1h-1zM745 212h1v1h-1zM745 179h1v1h-1zM777 699h1v1h-1zM777 666h1v1h-1zM777 634h1v1h-1zM777 602h1v1h-1zM777 569h1v1h-1zM777 537h1v1h-1zM777 504h1v1h-1zM777 472h1v1h-1zM777 439h1v1h-1zM777 407h1v1h-1zM777 374h1v1h-1zM777 342h1v1h-1zM777 309h1v1h-1zM777 277h1v1h-1zM777 244h1v1h-1zM777 212h1v1h-1zM777 179h1v1h-1zM810 699h1v1h-1zM810 666h1v1h-1zM810 634h1v1h-1zM810 602h1v1h-1zM810 569h1v1h-1zM810 537h1v1h-1zM810 504h1v1h-1zM810 472h1v1h-1zM810 439h1v1h-1zM810 407h1v1h-1zM810 374h1v1h-1zM810 342h1v1h-1zM810 309h1v1h-1zM810 277h1v1h-1zM810 244h1v1h-1zM810 212h1v1h-1zM810 179h1v1h-1zM842 699h1v1h-1zM842 666h1v1h-1zM842 634h1v1h-1zM842 602h1v1h-1zM842 569h1v1h-1zM842 537h1v1h-1zM842 504h1v1h-1zM842 472h1v1h-1zM842 439h1v1h-1zM842 407h1v1h-1zM842 374h1v1h-1zM842 342h1v1h-1zM842 309h1v1h-1zM842 277h1v1h-1zM842 244h1v1h-1zM842 212h1v1h-1zM842 179h1v1h-1zM875 699h1v1h-1zM875 666h1v1h-1zM875 634h1v1h-1zM875 602h1v1h-1zM875 569h1v1h-1zM875 537h1v1h-1zM875 504h1v1h-1zM875 472h1v1h-1zM875 439h1v1h-1zM875 407h1v1h-1zM875 374h1v1h-1zM875 342h1v1h-1zM875 309h1v1h-1zM875 277h1v1h-1zM875 244h1v1h-1zM875 212h1v1h-1zM875 179h1v1h-1zM907 699h1v1h-1zM907 666h1v1h-1zM907 634h1v1h-1zM907 602h1v1h-1zM907 569h1v1h-1zM907 537h1v1h-1zM907 504h1v1h-1zM907 472h1v1h-1zM907 439h1v1h-1zM907 407h1v1h-1zM907 374h1v1h-1zM907 342h1v1h-1zM907 309h1v1h-1zM907 277h1v1h-1zM907 244h1v1h-1zM907 212h1v1h-1zM907 179h1v1h-1zM940 699h1v1h-1zM940 666h1v1h-1zM940 634h1v1h-1zM940 602h1v1h-1zM940 569h1v1h-1zM940 537h1v1h-1zM940 504h1v1h-1zM940 472h1v1h-1zM940 439h1v1h-1zM940 407h1v1h-1zM940 374h1v1h-1zM940 342h1v1h-1zM940 309h1v1h-1zM940 277h1v1h-1zM940 244h1v1h-1zM940 212h1v1h-1zM940 179h1v1h-1zM972 699h1v1h-1zM972 666h1v1h-1zM972 634h1v1h-1zM972 602h1v1h-1zM972 569h1v1h-1zM972 537h1v1h-1zM972 504h1v1h-1zM972 472h1v1h-1zM972 439h1v1h-1zM972 407h1v1h-1zM972 374h1v1h-1zM972 342h1v1h-1zM972 309h1v1h-1zM972 277h1v1h-1zM972 244h1v1h-1zM972 212h1v1h-1zM972 179h1v1h-1zM1005 699h1v1h-1zM1005 666h1v1h-1zM1005 634h1v1h-1zM1005 602h1v1h-1zM1005 569h1v1h-1zM1005 537h1v1h-1zM1005 504h1v1h-1zM1005 472h1v1h-1zM1005 439h1v1h-1zM1005 407h1v1h-1zM1005 374h1v1h-1zM1005 342h1v1h-1zM1005 309h1v1h-1zM1005 277h1v1h-1zM1005 244h1v1h-1zM1005 212h1v1h-1zM1005 179h1v1h-1zM1037 699h1v1h-1zM1037 666h1v1h-1zM1037 634h1v1h-1zM1037 602h1v1h-1zM1037 569h1v1h-1zM1037 537h1v1h-1zM1037 504h1v1h-1zM1037 472h1v1h-1zM1037 439h1v1h-1zM1037 407h1v1h-1zM1037 374h1v1h-1zM1037 342h1v1h-1zM1037 309h1v1h-1zM1037 277h1v1h-1zM1037 244h1v1h-1zM1037 212h1v1h-1zM1037 179h1v1h-1zM1070 699h1v1h-1zM1070 666h1v1h-1zM1070 634h1v1h-1zM1070 602h1v1h-1zM1070 569h1v1h-1zM1070 537h1v1h-1zM1070 504h1v1h-1zM1070 472h1v1h-1zM1070 439h1v1h-1zM1070 407h1v1h-1zM1070 374h1v1h-1zM1070 342h1v1h-1zM1070 309h1v1h-1zM1070 277h1v1h-1zM1070 244h1v1h-1zM1070 212h1v1h-1zM1070 179h1v1h-1zM1102 699h1v1h-1zM1102 666h1v1h-1zM1102 634h1v1h-1zM1102 602h1v1h-1zM1102 569h1v1h-1zM1102 537h1v1h-1zM1102 504h1v1h-1zM1102 472h1v1h-1zM1102 439h1v1h-1zM1102 407h1v1h-1zM1102 374h1v1h-1zM1102 342h1v1h-1zM1102 309h1v1h-1zM1102 277h1v1h-1zM1102 244h1v1h-1zM1102 212h1v1h-1zM1102 179h1v1h-1zM1135 699h1v1h-1zM1135 666h1v1h-1zM1135 634h1v1h-1zM1135 602h1v1h-1zM1135 569h1v1h-1zM1135 537h1v1h-1zM1135 504h1v1h-1zM1135 472h1v1h-1zM1135 439h1v1h-1zM1135 407h1v1h-1zM1135 374h1v1h-1zM1135 342h1v1h-1zM1135 309h1v1h-1zM1135 277h1v1h-1zM1135 244h1v1h-1zM1135 212h1v1h-1zM1135 179h1v1h-1z" fill="#3e3e3e"/><rect x="127" y="155" width="1" height="577" fill="#1d1d1d"/><rect x="452" y="155" width="1" height="577" fill="#1d1d1d"/><rect x="777" y="155" width="1" height="577" fill="#1d1d1d"/><rect x="1102" y="155" width="1" height="577" fill="#1d1d1d"/><rect x="95" y="666" width="1043" height="2" fill="#111111"/><rect x="95" y="341" width="1043" height="2" fill="#111111"/><rect x="127" y="666" width="1" height="2" fill="#333"/><rect x="127" y="341" width="1" height="2" fill="#333"/><rect x="452" y="666" width="1" height="2" fill="#333"/><rect x="452" y="341" width="1" height="2" fill="#333"/><rect x="777" y="666" width="1" height="2" fill="#333"/><rect x="777" y="341" width="1" height="2" fill="#333"/><rect x="1102" y="666" width="1" height="2" fill="#333"/><rect x="1102" y="341" width="1" height="2" fill="#333"/></svg>
<svg class="a" style="left:95px;top:155px" width="1043" height="577" viewBox="95 155 1043 577"><rect x="107" y="666" width="41" height="2" fill="#4e0000"/><rect x="127" y="647" width="1" height="40" fill="#b80000"/><circle cx="127.5" cy="667" r="5.2" fill="none" stroke="#c00000" stroke-width="1"/><defs><radialGradient id="rg" cx="874.25" cy="566.75" r="39.6" gradientUnits="userSpaceOnUse"><stop offset="0.76" stop-color="#000" stop-opacity="0"/><stop offset="0.82" stop-color="#1a2026"/><stop offset="0.86" stop-color="#36424c"/><stop offset="0.89" stop-color="#2c353d"/><stop offset="0.92" stop-color="#52606c"/><stop offset="0.945" stop-color="#43505b"/><stop offset="0.975" stop-color="#6a7a88"/><stop offset="1" stop-color="#3e4a55"/></radialGradient></defs><circle cx="874.25" cy="566.75" r="39.5" fill="url(#rg)"/><path d="M873.8 566.2 L873.6 589.6 L879.75 584.2 L884.5 594.9 L888.8 592.7 L884.3 582.8 L890.2 582.3 Z" fill="#fff" stroke="#fff" stroke-width="0.8" stroke-linejoin="round"/><path d="M875.1 569.2 L875 586.6 L880.3 581.9 L885 592.8 L887.1 591.8 L882.5 581.2 L887.6 581.1 Z" fill="#fff" stroke="#000" stroke-width="1" stroke-linejoin="round"/></svg>
<svg class="a" style="left:72px;top:132px" width="1066" height="23" viewBox="72 132 1066 23"><rect x="95" y="154" width="1043" height="1" fill="#fafafa"/><path d="M1014.6 145.1 L1026.2 145.1 L1020.4 151.1 Z" fill="#000"/><rect x="95" y="148" width="1" height="7" fill="#707070"/><rect x="127" y="148" width="1" height="7" fill="#707070"/><rect x="160" y="148" width="1" height="7" fill="#707070"/><rect x="192" y="148" width="1" height="7" fill="#707070"/><rect x="225" y="148" width="1" height="7" fill="#707070"/><rect x="257" y="148" width="1" height="7" fill="#707070"/><rect x="290" y="148" width="1" height="7" fill="#707070"/><rect x="322" y="148" width="1" height="7" fill="#707070"/><rect x="355" y="148" width="1" height="7" fill="#707070"/><rect x="387" y="148" width="1" height="7" fill="#707070"/><rect x="420" y="148" width="1" height="7" fill="#707070"/><rect x="452" y="148" width="1" height="7" fill="#707070"/><rect x="485" y="148" width="1" height="7" fill="#707070"/><rect x="517" y="148" width="1" height="7" fill="#707070"/><rect x="550" y="148" width="1" height="7" fill="#707070"/><rect x="582" y="148" width="1" height="7" fill="#707070"/><rect x="615" y="148" width="1" height="7" fill="#707070"/><rect x="647" y="148" width="1" height="7" fill="#707070"/><rect x="680" y="148" width="1" height="7" fill="#707070"/><rect x="712" y="148" width="1" height="7" fill="#707070"/><rect x="745" y="148" width="1" height="7" fill="#707070"/><rect x="777" y="148" width="1" height="7" fill="#707070"/><rect x="810" y="148" width="1" height="7" fill="#707070"/><rect x="842" y="148" width="1" height="7" fill="#707070"/><rect x="875" y="148" width="1" height="7" fill="#707070"/><rect x="907" y="148" width="1" height="7" fill="#707070"/><rect x="940" y="148" width="1" height="7" fill="#707070"/><rect x="972" y="148" width="1" height="7" fill="#707070"/><rect x="1005" y="148" width="1" height="7" fill="#707070"/><rect x="1037" y="148" width="1" height="7" fill="#707070"/><rect x="1070" y="148" width="1" height="7" fill="#707070"/><rect x="1102" y="148" width="1" height="7" fill="#707070"/><rect x="1135" y="148" width="1" height="7" fill="#707070"/></svg>
<div class="a" style="left:72px;top:132px;width:1066px;height:16px;overflow:hidden"><div class="t" style="left:-3.6px;width:60px;text-align:center;top:0.68px;font-size:10.3px;letter-spacing:-1.0px;text-indent:1px;color:#262626">0</div><div class="t" style="left:25.5px;width:60px;text-align:center;top:0.68px;font-size:10.3px;letter-spacing:-1.0px;text-indent:1px;color:#262626">0</div><div class="t" style="left:58.5px;width:60px;text-align:center;top:0.68px;font-size:10.3px;letter-spacing:-1.0px;text-indent:1px;color:#262626">10</div><div class="t" style="left:90.5px;width:60px;text-align:center;top:0.68px;font-size:10.3px;letter-spacing:-1.0px;text-indent:1px;color:#262626">20</div><div class="t" style="left:123.5px;width:60px;text-align:center;top:0.68px;font-size:10.3px;letter-spacing:-1.0px;text-indent:1px;color:#262626">30</div><div class="t" style="left:155.5px;width:60px;text-align:center;top:0.68px;font-size:10.3px;letter-spacing:-1.0px;text-indent:1px;color:#262626">40</div><div class="t" style="left:188.5px;width:60px;text-align:center;top:0.68px;font-size:10.3px;letter-spacing:-1.0px;text-indent:1px;color:#262626">50</div><div class="t" style="left:220.5px;width:60px;text-align:center;top:0.68px;font-size:10.3px;letter-spacing:-1.0px;text-indent:1px;color:#262626">60</div><div class="t" style="left:253.5px;width:60px;text-align:center;top:0.68px;font-size:10.3px;letter-spacing:-1.0px;text-indent:1px;color:#262626">70</div><div class="t" style="left:285.5px;width:60px;text-align:center;top:0.68px;font-size:10.3px;letter-spacing:-1.0px;text-indent:1px;color:#262626">80</div><div class="t" style="left:318.5px;width:60px;text-align:center;top:0.68px;font-size:10.3px;letter-spacing:-1.0px;text-indent:1px;color:#262626">90</div><div class="t" style="left:350.5px;width:60px;text-align:center;top:0.68px;font-size:10.3px;letter-spacing:-1.0px;text-indent:1px;color:#262626">100</div><div class="t" style="left:383.5px;width:60px;text-align:center;top:0.68px;font-size:10.3px;letter-spacing:-1.0px;text-indent:1px;color:#262626">110</div><div class="t" style="left:415.5px;width:60px;text-align:center;top:0.68px;font-size:10.3px;letter-spacing:-1.0px;text-indent:1px;color:#262626">120</div><div class="t" style="left:448.5px;width:60px;text-align:center;top:0.68px;font-size:10.3px;letter-spacing:-1.0px;text-indent:1px;color:#262626">130</div><div class="t" style="left:480.5px;width:60px;text-align:center;top:0.68px;font-size:10.3px;letter-spacing:-1.0px;text-indent:1px;color:#262626">140</div><div class="t" style="left:513.5px;width:60px;text-align:center;top:0.68px;font-size:10.3px;letter-spacing:-1.0px;text-indent:1px;color:#262626">150</div><div class="t" style="left:545.5px;width:60px;text-align:center;top:0.68px;font-size:10.3px;letter-spacing:-1.0px;text-indent:1px;color:#262626">160</div><div class="t" style="left:578.5px;width:60px;text-align:center;top:0.68px;font-size:10.3px;letter-spacing:-1.0px;text-indent:1px;color:#262626">170</div><div class="t" style="left:610.5px;width:60px;text-align:center;top:0.68px;font-size:10.3px;letter-spacing:-1.0px;text-indent:1px;color:#262626">180</div><div class="t" style="left:643.5px;width:60px;text-align:center;top:0.68px;font-size:10.3px;letter-spacing:-1.0px;text-indent:1px;color:#262626">190</div><div class="t" style="left:675.5px;width:60px;text-align:center;top:0.68px;font-size:10.3px;letter-spacing:-1.0px;text-indent:1px;color:#262626">200</div><div class="t" style="left:708.5px;width:60px;text-align:center;top:0.68px;font-size:10.3px;letter-spacing:-1.0px;text-indent:1px;color:#262626">210</div><div class="t" style="left:740.5px;width:60px;text-align:center;top:0.68px;font-size:10.3px;letter-spacing:-1.0px;text-indent:1px;color:#262626">220</div><div class="t" style="left:773.5px;width:60px;text-align:center;top:0.68px;font-size:10.3px;letter-spacing:-1.0px;text-indent:1px;color:#262626">230</div><div class="t" style="left:805.5px;width:60px;text-align:center;top:0.68px;font-size:10.3px;letter-spacing:-1.0px;text-indent:1px;color:#262626">240</div><div class="t" style="left:838.5px;width:60px;text-align:center;top:0.68px;font-size:10.3px;letter-spacing:-1.0px;text-indent:1px;color:#262626">250</div><div class="t" style="left:870.5px;width:60px;text-align:center;top:0.68px;font-size:10.3px;letter-spacing:-1.0px;text-indent:1px;color:#262626">260</div><div class="t" style="left:903.5px;width:60px;text-align:center;top:0.68px;font-size:10.3px;letter-spacing:-1.0px;text-indent:1px;color:#262626">270</div><div class="t" style="left:935.5px;width:60px;text-align:center;top:0.68px;font-size:10.3px;letter-spacing:-1.0px;text-indent:1px;color:#262626">280</div><div class="t" style="left:968.5px;width:60px;text-align:center;top:0.68px;font-size:10.3px;letter-spacing:-1.0px;text-indent:1px;color:#262626">290</div><div class="t" style="left:1000.5px;width:60px;text-align:center;top:0.68px;font-size:10.3px;letter-spacing:-1.0px;text-indent:1px;color:#262626">300</div><div class="t" style="left:1033.5px;width:60px;text-align:center;top:0.68px;font-size:10.3px;letter-spacing:-1.0px;text-indent:1px;color:#262626">310</div></div>
<svg class="a" style="left:72px;top:155px" width="23" height="577" viewBox="72 155 23 577"><rect x="94" y="155" width="1" height="577" fill="#fafafa"/><path d="M85 311 L85 322.7 L91 316.9 Z" fill="#000"/><rect x="88" y="699" width="7" height="1" fill="#707070"/><rect x="88" y="666" width="7" height="1" fill="#707070"/><rect x="88" y="634" width="7" height="1" fill="#707070"/><rect x="88" y="602" width="7" height="1" fill="#707070"/><rect x="88" y="569" width="7" height="1" fill="#707070"/><rect x="88" y="537" width="7" height="1" fill="#707070"/><rect x="88" y="504" width="7" height="1" fill="#707070"/><rect x="88" y="472" width="7" height="1" fill="#707070"/><rect x="88" y="439" width="7" height="1" fill="#707070"/><rect x="88" y="407" width="7" height="1" fill="#707070"/><rect x="88" y="374" width="7" height="1" fill="#707070"/><rect x="88" y="342" width="7" height="1" fill="#707070"/><rect x="88" y="309" width="7" height="1" fill="#707070"/><rect x="88" y="277" width="7" height="1" fill="#707070"/><rect x="88" y="244" width="7" height="1" fill="#707070"/><rect x="88" y="212" width="7" height="1" fill="#707070"/><rect x="88" y="179" width="7" height="1" fill="#707070"/></svg>
<div class="a" style="left:72px;top:155px;width:16px;height:577px;overflow:hidden"><div class="t" style="left:-23.7px;top:572.5px;width:60px;height:10px;line-height:10px;text-align:center;font-size:10.3px;letter-spacing:-1.0px;text-indent:1px;color:#262626;transform:rotate(-90deg)">-20</div><div class="t" style="left:-23.7px;top:539.5px;width:60px;height:10px;line-height:10px;text-align:center;font-size:10.3px;letter-spacing:-1.0px;text-indent:1px;color:#262626;transform:rotate(-90deg)">-10</div><div class="t" style="left:-23.7px;top:506.5px;width:60px;height:10px;line-height:10px;text-align:center;font-size:10.3px;letter-spacing:-1.0px;text-indent:1px;color:#262626;transform:rotate(-90deg)">0</div><div class="t" style="left:-23.7px;top:474.5px;width:60px;height:10px;line-height:10px;text-align:center;font-size:10.3px;letter-spacing:-1.0px;text-indent:1px;color:#262626;transform:rotate(-90deg)">10</div><div class="t" style="left:-23.7px;top:442.5px;width:60px;height:10px;line-height:10px;text-align:center;font-size:10.3px;letter-spacing:-1.0px;text-indent:1px;color:#262626;transform:rotate(-90deg)">20</div><div class="t" style="left:-23.7px;top:409.5px;width:60px;height:10px;line-height:10px;text-align:center;font-size:10.3px;letter-spacing:-1.0px;text-indent:1px;color:#262626;transform:rotate(-90deg)">30</div><div class="t" style="left:-23.7px;top:377.5px;width:60px;height:10px;line-height:10px;text-align:center;font-size:10.3px;letter-spacing:-1.0px;text-indent:1px;color:#262626;transform:rotate(-90deg)">40</div><div class="t" style="left:-23.7px;top:344.5px;width:60px;height:10px;line-height:10px;text-align:center;font-size:10.3px;letter-spacing:-1.0px;text-indent:1px;color:#262626;transform:rotate(-90deg)">50</div><div class="t" style="left:-23.7px;top:312.5px;width:60px;height:10px;line-height:10px;text-align:center;font-size:10.3px;letter-spacing:-1.0px;text-indent:1px;color:#262626;transform:rotate(-90deg)">60</div><div class="t" style="left:-23.7px;top:279.5px;width:60px;height:10px;line-height:10px;text-align:center;font-size:10.3px;letter-spacing:-1.0px;text-indent:1px;color:#262626;transform:rotate(-90deg)">70</div><div class="t" style="left:-23.7px;top:247.5px;width:60px;height:10px;line-height:10px;text-align:center;font-size:10.3px;letter-spacing:-1.0px;text-indent:1px;color:#262626;transform:rotate(-90deg)">80</div><div class="t" style="left:-23.7px;top:214.5px;width:60px;height:10px;line-height:10px;text-align:center;font-size:10.3px;letter-spacing:-1.0px;text-indent:1px;color:#262626;transform:rotate(-90deg)">90</div><div class="t" style="left:-23.7px;top:182.5px;width:60px;height:10px;line-height:10px;text-align:center;font-size:10.3px;letter-spacing:-1.0px;text-indent:1px;color:#262626;transform:rotate(-90deg)">100</div><div class="t" style="left:-23.7px;top:149.5px;width:60px;height:10px;line-height:10px;text-align:center;font-size:10.3px;letter-spacing:-1.0px;text-indent:1px;color:#262626;transform:rotate(-90deg)">110</div><div class="t" style="left:-23.7px;top:117.5px;width:60px;height:10px;line-height:10px;text-align:center;font-size:10.3px;letter-spacing:-1.0px;text-indent:1px;color:#262626;transform:rotate(-90deg)">120</div><div class="t" style="left:-23.7px;top:84.5px;width:60px;height:10px;line-height:10px;text-align:center;font-size:10.3px;letter-spacing:-1.0px;text-indent:1px;color:#262626;transform:rotate(-90deg)">130</div><div class="t" style="left:-23.7px;top:52.5px;width:60px;height:10px;line-height:10px;text-align:center;font-size:10.3px;letter-spacing:-1.0px;text-indent:1px;color:#262626;transform:rotate(-90deg)">140</div><div class="t" style="left:-23.7px;top:19.5px;width:60px;height:10px;line-height:10px;text-align:center;font-size:10.3px;letter-spacing:-1.0px;text-indent:1px;color:#262626;transform:rotate(-90deg)">150</div></div><svg class="a" style="left:94px;top:110px" width="16" height="17" viewBox="94 110 16 17"><circle cx="102.1" cy="118.7" r="5.4" fill="#f4f4f4" stroke="#22388a" stroke-width="2.1"/><path d="M99.5 118.5 h5 M102 116 v5" stroke="#c8a0a0" stroke-width="0.6"/><path d="M102.8 119.5 L106.8 123.5" stroke="#f0a020" stroke-width="2.2" stroke-linecap="round"/><circle cx="107.2" cy="124" r="1.2" fill="#e07070"/></svg>
<div class="a" style="left:1155px;top:107px;width:300px;height:1px;background:#b8b8b8"></div>
<div class="a" style="left:1155px;top:108px;width:300px;height:690px;background:#fff"></div>
<div class="a" style="left:1155px;top:108px;width:300px;height:23px;background:linear-gradient(#e9e9e9,#e2e2e2 60%,#d4d4d4 90%,#b0b0b0 100%)"></div>
<svg class="a" style="left:1155px;top:108px" width="40" height="22" viewBox="1155 108 40 22"><circle cx="1163.9" cy="118" r="6.9" fill="#5f5f5f"/><path d="M1161 115.1 L1166.8 120.9 M1166.8 115.1 L1161 120.9" stroke="#eee" stroke-width="1.7"/><circle cx="1182" cy="118" r="6.9" fill="#5f5f5f"/><rect x="1181" y="115.4" width="4.6" height="4" fill="none" stroke="#eee" stroke-width="1"/><rect x="1178.6" y="118.1" width="5" height="3.8" fill="#5f5f5f" stroke="#eee" stroke-width="1.1"/></svg>
<div class="t" style="left:1278.5px;top:113.24px;font-size:12px;color:#2a2a2a">Lista de bloques</div>
<div class="a" style="left:1155px;top:131px;width:38px;height:25px;background:linear-gradient(#e8e8e8,#f1f1f1 60%,#efefef);border:1px solid #b4b4b4;border-top:none"></div>
<div class="a" style="left:1193px;top:131px;width:37.5px;height:25px;background:linear-gradient(#e8e8e8,#f1f1f1 60%,#efefef);border:1px solid #b4b4b4;border-top:none"></div>
<div class="a" style="left:1230.5px;top:131px;width:37.5px;height:25px;background:linear-gradient(#e8e8e8,#f1f1f1 60%,#efefef);border:1px solid #b4b4b4;border-top:none"></div>
<div class="a" style="left:1268px;top:131px;width:37.5px;height:25px;background:linear-gradient(#e8e8e8,#f1f1f1 60%,#efefef);border:1px solid #b4b4b4;border-top:none"></div>
<div class="a" style="left:1305.5px;top:131px;width:38.0px;height:25px;background:linear-gradient(#e8e8e8,#f1f1f1 60%,#efefef);border:1px solid #b4b4b4;border-top:none"></div>
<div class="a" style="left:1343.5px;top:131px;width:37.5px;height:25px;background:linear-gradient(#f7f7f7,#f3f3f3 60%,#eeeeee);border:1px solid #b4b4b4;border-top:none"></div>
<div class="a" style="left:1381px;top:131px;width:37.5px;height:25px;background:linear-gradient(#e8e8e8,#f1f1f1 60%,#efefef);border:1px solid #b4b4b4;border-top:none"></div>
<div class="a" style="left:1418.5px;top:131px;width:36.5px;height:25px;background:linear-gradient(#f7f7f7,#f3f3f3 60%,#eeeeee);border:1px solid #b4b4b4;border-top:none"></div>
<svg class="a" style="left:1155px;top:131px" width="300" height="25" viewBox="1155 131 300 25"><path d="M1166.5 142.9 C1167.7 136.6 1180.3 136.6 1181.5 142.9 C1180.0 148.4 1168.0 148.4 1166.5 142.9 Z" fill="#000"/><path d="M1169.3 141.6 A 4.7 4.6 0 0 0 1178.7 141.6 Z" fill="#fff"/><circle cx="1174" cy="141.7" r="2.5" fill="#000"/><circle cx="1173.2" cy="141.0" r="0.7" fill="#888" opacity="0.8"/><path d="M1203.8 142.9 C1205.0 136.6 1217.6 136.6 1218.8 142.9 C1217.3 148.4 1205.3 148.4 1203.8 142.9 Z" fill="#a9a9a9"/><path d="M1206.6 141.6 A 4.7 4.6 0 0 0 1216.0 141.6 Z" fill="#f0f0f0"/><circle cx="1211.3" cy="141.7" r="2.5" fill="#a9a9a9"/><circle cx="1210.5" cy="141.0" r="0.7" fill="#888" opacity="0.8"/><path d="M1248.8 136.3 v12.6 M1242.5 142.6 h12.6" stroke="#e00000" stroke-width="2.9"/><path d="M1280 142.8 h12.5" stroke="#f08a8a" stroke-width="2.6"/><text x="1324" y="147.5" text-anchor="middle" font-family="Liberation Sans" font-size="11.5" fill="#8a8a8a" letter-spacing="0.5">a b</text><path d="M1323.3 134.5 v13.5" stroke="#9a9a9a" stroke-width="0.8"/><path d="M1357.94 149.15 L1367.92 138.67 L1365.45 136.32 L1355.47 146.81 Z" fill="#e8a830" stroke="#6a4a10" stroke-width="0.6"/><path d="M1367.92 138.67 L1369.43 137.07 L1366.97 134.73 L1365.45 136.32 Z" fill="#e02020" stroke="#7a1a10" stroke-width="0.6"/><path d="M1354.50 150.30 L1357.94 149.15 L1355.47 146.81 Z" fill="#f0d8a8" stroke="#5a4a20" stroke-width="0.5"/><rect x="1393.7" y="136.2" width="11.5" height="12.5" fill="#eaeaf0" stroke="#c8c8d8" stroke-width="0.6"/><path d="M1397 137.5 Q1401.5 138 1400.5 143 L1400.5 146" fill="none" stroke="#88aaf0" stroke-width="2.2"/><path d="M1397.3 144 L1400.5 148.5 L1403.7 144 Z" fill="#88aaf0"/><rect x="1430.6" y="137.3" width="10.6" height="10.6" rx="0.8" fill="#e86848" stroke="#c84a30" stroke-width="0.8"/><path d="M1433.3 140 L1438.5 145.2 M1438.5 140 L1433.3 145.2" stroke="#fff" stroke-width="1.5"/></svg>
<div class="a" style="left:1155px;top:156px;width:300px;height:152px;background:#fff"></div>
<div class="a" style="left:1155px;top:157px;width:299px;height:20px;background:#0b4fd8"></div>
<svg class="a" style="left:1155px;top:156px" width="300" height="45" viewBox="1155 156 300 45"><path d="M1162.075 166.885 C1163.2150000000001 160.9 1175.185 160.9 1176.325 166.885 C1174.9 172.10999999999999 1163.5 172.10999999999999 1162.075 166.885 Z" fill="#2a3a60"/><path d="M1164.7350000000001 165.65 A 4.465 4.369999999999999 0 0 0 1173.665 165.65 Z" fill="#0b4fd8"/><circle cx="1169.2" cy="165.745" r="2.375" fill="#2a3a60"/><circle cx="1168.44" cy="165.07999999999998" r="0.6649999999999999" fill="#888" opacity="0.8"/><path d="M1188.11 172.55 L1198.14 162.22 L1195.99 160.13 L1185.95 170.46 Z" fill="#d8b070" stroke="#6a4a10" stroke-width="0.6"/><path d="M1198.14 162.22 L1199.68 160.65 L1197.52 158.55 L1195.99 160.13 Z" fill="#d06060" stroke="#7a1a10" stroke-width="0.6"/><path d="M1184.80 173.80 L1188.11 172.55 L1185.95 170.46 Z" fill="#f0d8a8" stroke="#5a4a20" stroke-width="0.5"/><path d="M1162.075 186.885 C1163.2150000000001 180.9 1175.185 180.9 1176.325 186.885 C1174.9 192.10999999999999 1163.5 192.10999999999999 1162.075 186.885 Z" fill="#000"/><path d="M1164.7350000000001 185.65 A 4.465 4.369999999999999 0 0 0 1173.665 185.65 Z" fill="#fff"/><circle cx="1169.2" cy="185.745" r="2.375" fill="#000"/><circle cx="1168.44" cy="185.07999999999998" r="0.6649999999999999" fill="#888" opacity="0.8"/></svg>
<div class="t" style="left:1205px;top:160.19px;font-size:13px;color:#fff;letter-spacing:0.2px">Model (*Model_Space)</div>
<div class="t" style="left:1205px;top:180.19px;font-size:13px;color:#1a1a1a;letter-spacing:0.05px">Layout1 (*Paper_Space)</div>
<div class="a" style="left:1155px;top:307px;width:300px;height:2px;background:linear-gradient(#b8b8b8,#e0e0e0)"></div>
<div class="a" style="left:1155px;top:309px;width:300px;height:23px;background:linear-gradient(#e9e9e9,#e2e2e2 60%,#d4d4d4 90%,#b0b0b0 100%)"></div>
<svg class="a" style="left:1155px;top:309px" width="40" height="22" viewBox="1155 309 40 22"><circle cx="1163.9" cy="319" r="6.9" fill="#5f5f5f"/><path d="M1161 316.1 L1166.8 321.9 M1166.8 316.1 L1161 321.9" stroke="#eee" stroke-width="1.7"/><circle cx="1182" cy="319" r="6.9" fill="#5f5f5f"/><rect x="1181" y="316.4" width="4.6" height="4" fill="none" stroke="#eee" stroke-width="1"/><rect x="1178.6" y="319.1" width="5" height="3.8" fill="#5f5f5f" stroke="#eee" stroke-width="1.1"/></svg>
<div class="t" style="left:1284px;top:314.24px;font-size:12px;color:#2a2a2a">Lista de capas</div>
<div class="a" style="left:1155px;top:332px;width:60px;height:26px;background:linear-gradient(#e8e8e8,#f1f1f1 60%,#efefef);border:1px solid #b4b4b4;border-top:none"></div>
<div class="a" style="left:1215px;top:332px;width:60px;height:26px;background:linear-gradient(#e8e8e8,#f1f1f1 60%,#efefef);border:1px solid #b4b4b4;border-top:none"></div>
<div class="a" style="left:1275px;top:332px;width:60px;height:26px;background:linear-gradient(#e8e8e8,#f1f1f1 60%,#efefef);border:1px solid #b4b4b4;border-top:none"></div>
<div class="a" style="left:1335px;top:332px;width:60px;height:26px;background:linear-gradient(#e8e8e8,#f1f1f1 60%,#efefef);border:1px solid #b4b4b4;border-top:none"></div>
<div class="a" style="left:1395px;top:332px;width:60px;height:26px;background:linear-gradient(#e8e8e8,#f1f1f1 60%,#efefef);border:1px solid #b4b4b4;border-top:none"></div>
<svg class="a" style="left:1155px;top:332px" width="300" height="26" viewBox="1155 332 300 26"><path d="M1177.5 344.1 C1178.7 337.8 1191.3 337.8 1192.5 344.1 C1191.0 349.59999999999997 1179.0 349.59999999999997 1177.5 344.1 Z" fill="#000"/><path d="M1180.3 342.8 A 4.7 4.6 0 0 0 1189.7 342.8 Z" fill="#fff"/><circle cx="1185" cy="342.90000000000003" r="2.5" fill="#000"/><circle cx="1184.2" cy="342.2" r="0.7" fill="#888" opacity="0.8"/><path d="M1237.5 344.1 C1238.7 337.8 1251.3 337.8 1252.5 344.1 C1251.0 349.59999999999997 1239.0 349.59999999999997 1237.5 344.1 Z" fill="#a9a9a9"/><path d="M1240.3 342.8 A 4.7 4.6 0 0 0 1249.7 342.8 Z" fill="#f0f0f0"/><circle cx="1245" cy="342.90000000000003" r="2.5" fill="#a9a9a9"/><circle cx="1244.2" cy="342.2" r="0.7" fill="#888" opacity="0.8"/><path d="M1304.8 337.5 v12.6 M1298.5 343.8 h12.6" stroke="#e00000" stroke-width="2.9"/><path d="M1358.8 344 h12.4" stroke="#e00000" stroke-width="2.7"/><path d="M1421.24 350.07 L1431.31 339.56 L1428.85 337.21 L1418.79 347.71 Z" fill="#e8a830" stroke="#6a4a10" stroke-width="0.6"/><path d="M1431.31 339.56 L1432.83 337.98 L1430.37 335.62 L1428.85 337.21 Z" fill="#e02020" stroke="#7a1a10" stroke-width="0.6"/><path d="M1417.80 351.20 L1421.24 350.07 L1418.79 347.71 Z" fill="#f0d8a8" stroke="#5a4a20" stroke-width="0.5"/></svg>
<div class="a" style="left:1155px;top:378px;width:299px;height:20px;background:#0b4fd8"></div>
<svg class="a" style="left:1155px;top:358px" width="300" height="62" viewBox="1155 358 300 62"><rect x="1161.5" y="363.5" width="15" height="8.5" fill="#fff" stroke="#222" stroke-width="1"/><path d="M1415.875 368.285 C1417.015 362.3 1428.985 362.3 1430.125 368.285 C1428.7 373.51 1417.3 373.51 1415.875 368.285 Z" fill="#000"/><path d="M1418.535 367.05 A 4.465 4.369999999999999 0 0 0 1427.465 367.05 Z" fill="#fff"/><circle cx="1423" cy="367.145" r="2.375" fill="#000"/><circle cx="1422.24" cy="366.48" r="0.6649999999999999" fill="#888" opacity="0.8"/><path d="M1441.8 368 v-3 a3.2 3.2 0 0 1 6.4 0 v3" fill="none" stroke="#bdbdbd" stroke-width="1.6"/><rect x="1440.2" y="367.5" width="9.6" height="6.8" rx="0.8" fill="#bdbdbd"/><rect x="1161.5" y="383.5" width="15" height="8.5" fill="#d8404a" stroke="#222" stroke-width="1"/><path d="M1415.875 388.285 C1417.015 382.3 1428.985 382.3 1430.125 388.285 C1428.7 393.51 1417.3 393.51 1415.875 388.285 Z" fill="#2a3a60"/><path d="M1418.535 387.05 A 4.465 4.369999999999999 0 0 0 1427.465 387.05 Z" fill="#0b4fd8"/><circle cx="1423" cy="387.145" r="2.375" fill="#2a3a60"/><circle cx="1422.24" cy="386.48" r="0.6649999999999999" fill="#888" opacity="0.8"/><path d="M1398.23 393.67 L1407.48 384.06 L1405.47 382.11 L1396.21 391.72 Z" fill="#d8b070" stroke="#6a4a10" stroke-width="0.6"/><path d="M1407.48 384.06 L1409.01 382.47 L1406.99 380.53 L1405.47 382.11 Z" fill="#d06060" stroke="#7a1a10" stroke-width="0.6"/><path d="M1395.00 395.00 L1398.23 393.67 L1396.21 391.72 Z" fill="#f0d8a8" stroke="#5a4a20" stroke-width="0.5"/><path d="M1441.8 388 v-3 a3.2 3.2 0 0 1 6.4 0 v3" fill="none" stroke="#b8c4dc" stroke-width="1.6"/><rect x="1440.2" y="387.5" width="9.6" height="6.8" rx="0.8" fill="#b8c4dc"/><rect x="1161.5" y="403.5" width="15" height="8.5" fill="#000" stroke="#222" stroke-width="1"/><path d="M1415.875 408.285 C1417.015 402.3 1428.985 402.3 1430.125 408.285 C1428.7 413.51 1417.3 413.51 1415.875 408.285 Z" fill="#000"/><path d="M1418.535 407.05 A 4.465 4.369999999999999 0 0 0 1427.465 407.05 Z" fill="#fff"/><circle cx="1423" cy="407.145" r="2.375" fill="#000"/><circle cx="1422.24" cy="406.48" r="0.6649999999999999" fill="#888" opacity="0.8"/><path d="M1441.8 408 v-3 a3.2 3.2 0 0 1 6.4 0 v3" fill="none" stroke="#bdbdbd" stroke-width="1.6"/><rect x="1440.2" y="407.5" width="9.6" height="6.8" rx="0.8" fill="#bdbdbd"/></svg>
<div class="t" style="left:1183px;top:361.49px;font-size:13px;color:#1a1a1a">0</div>
<div class="t" style="left:1183px;top:381.49px;font-size:13px;color:#fff;letter-spacing:0.2px">Centro</div>
<div class="t" style="left:1183px;top:401.49px;font-size:13px;color:#1a1a1a;letter-spacing:0.2px">Visible</div>
<div class="a" style="left:1454px;top:107px;width:1px;height:691px;background:#c8c8c8"></div>
<div class="a" style="left:1455px;top:107px;width:45px;height:691px;background:linear-gradient(90deg,#c8c8c8 0px,#ececec 2px,#e4e4e4 20px,#d0d0d0 40px,#c4c4c4 45px)"></div>
<div class="a" style="left:1461.5px;top:116px;width:2px;height:2px;background:#a8a8a8"></div>
<div class="a" style="left:1467.8px;top:116px;width:2px;height:2px;background:#a8a8a8"></div>
<div class="a" style="left:1474.1px;top:116px;width:2px;height:2px;background:#a8a8a8"></div>
<div class="a" style="left:1480.4px;top:116px;width:2px;height:2px;background:#a8a8a8"></div>
<div class="a" style="left:1486.7px;top:116px;width:2px;height:2px;background:#a8a8a8"></div>
<div class="a" style="left:1457px;top:120.6px;width:41px;height:41.4px;background:#b6b6b6;border-radius:7px"></div>
<div class="a" style="left:1457px;top:167.6px;width:41px;height:41.8px;background:#b6b6b6;border-radius:7px"></div>
<div class="a" style="left:1457px;top:418px;width:41px;height:43.0px;background:#b6b6b6;border-radius:7px"></div>
<div class="a" style="left:1458px;top:262px;width:40px;height:1px;background:repeating-linear-gradient(90deg,#777 0 1px,transparent 1px 3px)"></div>
<div class="a" style="left:1458px;top:411px;width:40px;height:1px;background:repeating-linear-gradient(90deg,#777 0 1px,transparent 1px 3px)"></div>
<svg class="a" style="left:1455px;top:107px" width="45" height="420" viewBox="1455 107 45 420"><rect x="1463.5" y="127.5" width="26.5" height="26.6" fill="#fff" stroke="#222" stroke-width="1"/><rect x="1463" y="127" width="27.5" height="4.6" fill="#000"/><rect x="1464.3" y="128.2" width="3" height="3" fill="#fff"/><path d="M1468.5 140 L1476 136.5 L1476 150 L1468.5 153.5 Z" fill="#aaa" stroke="#555" stroke-width="0.7"/><path d="M1471 139 L1484 133.5 L1484 147 L1471 152.5 Z" fill="#eee" stroke="#666" stroke-width="0.7"/><path d="M1474 148 L1479.5 139 L1481 147 Z" fill="none" stroke="#e04040" stroke-width="0.9"/><rect x="1463.5" y="174.5" width="26.5" height="26.6" fill="#fff" stroke="#222" stroke-width="1"/><rect x="1463" y="174" width="27.5" height="4.6" fill="#000"/><rect x="1464.3" y="175.2" width="3" height="3" fill="#fff"/><rect x="1469" y="183.5" width="10.5" height="8" fill="#f4e8b0" stroke="#555" stroke-width="0.8"/><circle cx="1480" cy="192" r="4.8" fill="#f4e8b0" fill-opacity="0.85" stroke="#555" stroke-width="0.8"/><rect x="1463.5" y="221.5" width="26.5" height="26.6" fill="#fff" stroke="#222" stroke-width="1"/><rect x="1463" y="221" width="27.5" height="4.6" fill="#000"/><rect x="1464.3" y="222.2" width="3" height="3" fill="#fff"/><rect x="1467.5" y="230" width="19" height="14" rx="2" fill="#f2f4f8" stroke="#b8c8e0" stroke-width="0.9"/><rect x="1463.5" y="277.5" width="26.5" height="26.6" fill="#fff" stroke="#222" stroke-width="1"/><rect x="1463" y="277" width="27.5" height="4.6" fill="#000"/><rect x="1464.3" y="278.2" width="3" height="3" fill="#fff"/><rect x="1466" y="284.5" width="4" height="3.2" fill="#000"/><rect x="1472.5" y="284.3" width="14.5" height="3.5" fill="#fff" stroke="#333" stroke-width="0.7"/><rect x="1466" y="289.7" width="4" height="3.2" fill="#000"/><rect x="1472.5" y="289.5" width="14.5" height="3.5" fill="#fff" stroke="#333" stroke-width="0.7"/><rect x="1466" y="294.9" width="4" height="3.2" fill="#000"/><rect x="1472.5" y="294.7" width="14.5" height="3.5" fill="#fff" stroke="#333" stroke-width="0.7"/><rect x="1463.5" y="323.5" width="26.5" height="26.6" fill="#fff" stroke="#222" stroke-width="1"/><rect x="1463" y="323" width="27.5" height="4.6" fill="#000"/><rect x="1464.3" y="324.2" width="3" height="3" fill="#fff"/><path d="M1468.5 333.5 L1485.5 333.5 L1478.5 341 L1478.5 349 L1475.5 346.5 L1475.5 341 Z" fill="#b0b0b0" stroke="#555" stroke-width="0.7"/><ellipse cx="1477" cy="333.8" rx="8.5" ry="1.6" fill="#888" stroke="#555" stroke-width="0.5"/><rect x="1463.5" y="369.5" width="26.5" height="26.6" fill="#fff" stroke="#222" stroke-width="1"/><rect x="1463" y="369" width="27.5" height="4.6" fill="#000"/><rect x="1464.3" y="370.2" width="3" height="3" fill="#fff"/><path d="M1468 378 L1468 392 L1473 387 L1479 387 L1479 383 L1473 383 Z" fill="#eee" stroke="#444" stroke-width="0.8"/><rect x="1475" y="382" width="8.5" height="6" fill="#bbb" stroke="#666" stroke-width="0.6"/><path d="M1466 385 h22" stroke="#f08080" stroke-width="0.8" stroke-dasharray="1.5 1"/><rect x="1463.5" y="425.5" width="26.5" height="26.6" fill="#fff" stroke="#222" stroke-width="1"/><rect x="1463" y="425" width="27.5" height="4.6" fill="#000"/><rect x="1464.3" y="426.2" width="3" height="3" fill="#fff"/><path d="M1466 432.5 h13" stroke="#777" stroke-width="0.8"/><path d="M1466 436.3 h11" stroke="#777" stroke-width="0.8"/><path d="M1466 440.1 h13" stroke="#777" stroke-width="0.8"/><path d="M1466 443.9 h11" stroke="#777" stroke-width="0.8"/><path d="M1463.5 447.5 h27" stroke="#333" stroke-width="0.7"/><path d="M1466 450 h3 M1471 450 h14" stroke="#333" stroke-width="0.9"/><rect x="1463.5" y="472.5" width="26.5" height="26.6" fill="#fff" stroke="#222" stroke-width="1"/><rect x="1463" y="472" width="27.5" height="4.6" fill="#000"/><rect x="1464.3" y="473.2" width="3" height="3" fill="#fff"/><rect x="1470.5" y="480" width="13" height="14.5" rx="1" fill="#c88a2a" stroke="#8a5a10" stroke-width="0.6"/><rect x="1472" y="481.3" width="10" height="12" fill="#fafafa"/><rect x="1474" y="479" width="6" height="2.8" fill="#999"/><path d="M1473.5 485 h7 M1473.5 487.3 h7 M1473.5 489.6 h5" stroke="#bbb" stroke-width="0.7"/></svg>
<div class="a" style="left:0px;top:797px;width:1500px;height:1px;background:#d2d2d2"></div>
<div class="a" style="left:0px;top:798px;width:1500px;height:46px;background:#dcdcdc"></div>
<div class="t " style="left:2.00px;top:808.04px;font-size:9.4px;color:#1a1a1a;letter-spacing:0.33px;-webkit-text-stroke:0.15px #1a1a1a">274.6154,107.6923</div>
<div class="t " style="left:2.00px;top:827.84px;font-size:9.4px;color:#1a1a1a;letter-spacing:0.33px;-webkit-text-stroke:0.15px #1a1a1a">@274.6154,107.6923</div>
<div class="a" style="left:253px;top:802px;width:1px;height:40px;background:#a4a4a4"></div>
<div class="t " style="left:256.00px;top:808.04px;font-size:9.4px;color:#1a1a1a;letter-spacing:0.33px;-webkit-text-stroke:0.15px #1a1a1a">294.9767&lt;21°</div>
<div class="t " style="left:256.00px;top:827.84px;font-size:9.4px;color:#1a1a1a;letter-spacing:0.33px;-webkit-text-stroke:0.15px #1a1a1a">@294.9767&lt;21°</div>
<div class="a" style="left:506.5px;top:819px;width:6px;height:6px;background:#c4c4c4;border-radius:3px"></div>
<div class="t " style="left:569.00px;top:817.87px;font-size:9.6px;color:#1a1a1a;letter-spacing:0.3px;-webkit-text-stroke:0.15px #1a1a1a">Seleccionar entidad o región</div>
<div class="a" style="left:940px;top:819px;width:6px;height:6px;background:#c4c4c4;border-radius:3px"></div>
<div class="t " style="left:949.00px;top:817.87px;font-size:9.6px;color:#1a1a1a;letter-spacing:0.3px;-webkit-text-stroke:0.15px #1a1a1a">No hay entidades seleccionadas.</div>
<div class="a" style="left:1269px;top:819px;width:6px;height:6px;background:#c4c4c4;border-radius:3px"></div>
<svg class="a" style="left:714px;top:803px" width="24" height="36" viewBox="714 803 24 36"><path d="M717.5 814 Q717.5 806.3 726 806.3 Q734.5 806.3 734.5 814 L734.5 828 Q734.5 835.7 726 835.7 Q717.5 835.7 717.5 828 Z" fill="#fff" stroke="#333" stroke-width="0.9"/><path d="M717.5 818.8 Q726 817 734.5 818.8" fill="none" stroke="#333" stroke-width="0.9"/><path d="M726 806.3 v12" stroke="#333" stroke-width="0.6"/><rect x="724.6" y="809" width="2.8" height="6.2" rx="1.4" fill="#fff" stroke="#333" stroke-width="0.8"/></svg><svg class="a" style="left:1130px;top:776px" width="22" height="18" viewBox="1130 776 22 18"><rect x="1133.5" y="780.5" width="14" height="9.5" fill="#f4f4f4" stroke="#333" stroke-width="1"/><rect x="1133" y="780" width="15" height="2.8" fill="#111"/><rect x="1144.5" y="780.8" width="1.2" height="1.2" fill="#fff"/></svg>
</body></html>
